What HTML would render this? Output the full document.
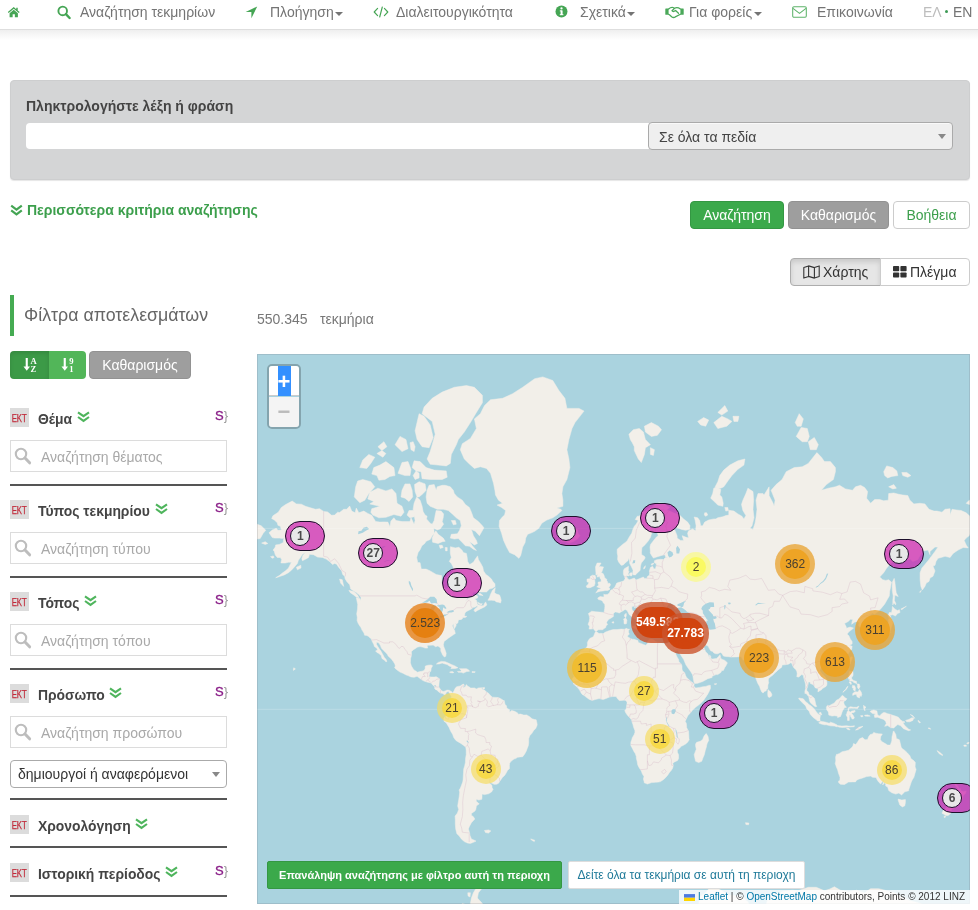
<!DOCTYPE html>
<html lang="el">
<head>
<meta charset="utf-8">
<title>Αναζήτηση τεκμηρίων</title>
<style>
*{box-sizing:border-box}
html,body{margin:0;padding:0;background:#fff}
body{width:978px;height:910px;overflow:hidden;position:relative;font-family:"Liberation Sans",Arial,sans-serif;font-size:14px;line-height:20px;color:#333}
.a{position:absolute;white-space:nowrap}
svg{display:block}
/* nav */
#nav{left:0;top:0;width:978px;height:30px;background:#fff;border-bottom:1px solid #dedede}
#navsh{left:0;top:30px;width:978px;height:10px;background:linear-gradient(#efefef,#fff)}
.nt{top:2px;color:#747474;font-size:14px;line-height:20px}
.caret{width:0;height:0;border-left:4px solid transparent;border-right:4px solid transparent;border-top:4px solid #747474;top:12px}
.g{fill:#45a554}
/* search panel */
#panel{left:10px;top:80px;width:960px;height:100px;background:#d4d5d6;border:1px solid #cdcecf;border-radius:4px;box-shadow:0 1px 1px rgba(0,0,0,.1)}
#plabel{left:26px;top:96px;font-weight:bold;color:#444}
#pinput{left:26px;top:123px;width:624px;height:26px;background:#fff;border-radius:4px 0 0 4px}
#psel{left:648px;top:122px;width:305px;height:28px;background:#efefef;border:1px solid #aaa;border-radius:4px;box-shadow:0 1px 0 rgba(255,255,255,.6) inset}
#pseltxt{left:659px;top:127px;color:#444}
.tri{width:0;height:0;border-left:4px solid transparent;border-right:4px solid transparent;border-top:5px solid #888}
#more{left:27px;top:200px;font-weight:bold;color:#3c9f4c}
.btn{top:201px;height:28px;border-radius:4px;text-align:center;line-height:26px;font-size:14px;border:1px solid transparent}
/* filters */
#fbar{left:10px;top:295px;width:4px;height:41px;background:#45ab52}
#ftitle{left:24px;top:302px;font-size:17.8px;line-height:26px;color:#666}
.fh{left:38px;font-weight:bold;color:#444;font-size:13.9px;margin-top:.7px}
.ekt{left:10px;width:19px;height:19px;background:#dcdcdc;color:#c02a3a;font-size:10.5px;line-height:20px;text-align:center;overflow:hidden}
.ekt span{display:inline-block;transform:scaleX(.74);transform-origin:50% 50%;margin-left:-4px;margin-right:-4px;-webkit-text-stroke:.25px #c02a3a}
.fin{left:10px;width:217px;height:32px;border:1px solid #dcdcdc;background:#fff}
.fph{left:41px;color:#a9a9a9}
.fdiv{left:10px;width:217px;height:2px;background:#555}
.sv{left:215px;font-size:13px;color:#8a1f88;line-height:14px;-webkit-text-stroke:.35px #8a1f88}
.sv i{font-style:normal;color:#999;-webkit-text-stroke:0 transparent}
/* map */
#map{left:257px;top:354px;width:713px;height:550px;overflow:hidden;background:#aad3df}
.mc{position:absolute;border-radius:20px;text-align:center;font-size:12px;line-height:30px;color:#4a4030}
.mc b{display:block;position:absolute;left:5px;top:5px;right:5px;bottom:5px;border-radius:15px;font-weight:normal}
.mc.s{line-height:20px}
.pill{position:absolute;width:40px;height:30px;border-radius:15px;border:1.5px solid #1d0f2b;background:rgba(204,28,172,.7)}
.pill b{position:absolute;left:4px;top:3.5px;width:20px;height:20px;border-radius:10px;border:1.5px solid #1d0f2b;background:#e8e8e8;color:#4a4a4a;font-size:12px;line-height:18px;text-align:center;font-weight:bold}
</style>
</head>
<body>
<div id="wrap" style="position:absolute;left:0;top:0;width:978px;height:910px;will-change:transform;transform:translateZ(0)">
<!-- NAV -->
<div id="nav" class="a"></div><div id="navsh" class="a"></div>
<svg class="a" style="left:7px;top:6.3px" width="13.5" height="12" viewBox="0 0 14 13"><path class="g" d="M7 1.2 L0.6 6.6 L1.5 7.6 L7 3 L12.5 7.6 L13.4 6.6 L11.3 4.8 V1.8 H9.7 V3.5 Z"/><path class="g" d="M7 4.1 L2.5 7.9 V12.2 H5.8 V9 H8.2 V12.2 H11.5 V7.9 Z"/></svg>
<svg class="a" style="left:57px;top:5px" width="14" height="15" viewBox="0 0 14 15"><circle cx="5.7" cy="5.9" r="4.3" fill="none" stroke="#45a554" stroke-width="1.9"/><path d="M8.9 9.2 L12.6 13" stroke="#45a554" stroke-width="2.4" stroke-linecap="round"/></svg>
<div class="a nt" style="left:80px">Αναζήτηση τεκμηρίων</div>
<svg class="a" style="left:244.5px;top:5.5px" width="13" height="13" viewBox="0 0 12 12"><path class="g" d="M11.3 0.5 L0.6 5.5 H5.9 V11.2 Z"/></svg>
<div class="a nt" style="left:270px">Πλοήγηση</div><div class="a caret" style="left:335px"></div>
<svg class="a" style="left:373px;top:6px" width="16" height="12" viewBox="0 0 16 12"><path d="M4.6 2.4 L1.2 6 L4.6 9.6 M11.4 2.4 L14.8 6 L11.4 9.6 M9.3 1 L6.7 11" fill="none" stroke="#45a554" stroke-width="1.15" stroke-linecap="round" stroke-linejoin="round"/></svg>
<div class="a nt" style="left:396px">Διαλειτουργικότητα</div>
<svg class="a" style="left:555px;top:5px" width="13" height="13" viewBox="0 0 13 13"><circle cx="6.5" cy="6.5" r="6" class="g"/><rect x="5.6" y="5.4" width="2" height="4.6" fill="#fff"/><rect x="4.8" y="5.4" width="2" height="1" fill="#fff"/><rect x="4.8" y="9.2" width="3.6" height="1" fill="#fff"/><circle cx="6.5" cy="3.4" r="1.15" fill="#fff"/></svg>
<div class="a nt" style="left:580px">Σχετικά</div><div class="a caret" style="left:627px"></div>
<svg class="a" style="left:664.5px;top:6px" width="19" height="13" viewBox="0 0 19 13"><rect x="0.3" y="2.4" width="3.3" height="6.4" rx=".5" fill="#4aa859"/><rect x="15.4" y="2.4" width="3.3" height="6.4" rx=".5" fill="#4aa859"/><path d="M3.6 3 Q6 .9 8 1.5 L9.6 2.3 Q12.2 .7 15.4 3 M3.6 8.2 Q5 9 6.6 10.7 Q8.6 12.2 10.3 10.9 L15.4 8.2 M9.6 2.3 L7 4.7 Q7.9 6.1 9.4 5.1 L10.6 4.5 L13.5 7.3" fill="none" stroke="#4aa859" stroke-width="1.25" stroke-linejoin="round" stroke-linecap="round"/></svg>
<div class="a nt" style="left:689px">Για φορείς</div><div class="a caret" style="left:754px"></div>
<svg class="a" style="left:792px;top:6px" width="15" height="12" viewBox="0 0 15 12"><rect x="0.7" y="0.7" width="13.6" height="10.6" rx="1.2" fill="none" stroke="#5db36a" stroke-width="1.05"/><path d="M1 2.4 L7.5 7.3 L14 2.4" fill="none" stroke="#5db36a" stroke-width="1.05"/></svg>
<div class="a nt" style="left:817px">Επικοινωνία</div>
<div class="a nt" style="left:923px;color:#bdbdbd">ΕΛ</div>
<div class="a" style="left:944.5px;top:10px;width:3.4px;height:3.4px;border-radius:2px;background:#3d9a55"></div>
<div class="a nt" style="left:953px">EN</div>

<!-- SEARCH PANEL -->
<div id="panel" class="a"></div>
<div id="plabel" class="a">Πληκτρολογήστε λέξη ή φράση</div>
<div id="pinput" class="a"></div>
<div id="psel" class="a"></div>
<div id="pseltxt" class="a">Σε όλα τα πεδία</div>
<div class="a tri" style="left:938px;top:134px"></div>
<svg class="a" style="left:10px;top:204px" width="13" height="13" viewBox="0 0 13 13"><path d="M1.2 1.6 L6.5 5.6 L11.8 1.6 M1.2 6.4 L6.5 10.4 L11.8 6.4" fill="none" stroke="#45a554" stroke-width="2.2" stroke-linejoin="miter"/></svg>
<div id="more" class="a">Περισσότερα κριτήρια αναζήτησης</div>
<div class="a btn" style="left:690px;width:94px;background:#3ba94b;border-color:#349743;color:#fff">Αναζήτηση</div>
<div class="a btn" style="left:788px;width:101px;background:#9e9e9e;border-color:#929292;color:#fff">Καθαρισμός</div>
<div class="a btn" style="left:893px;width:77px;background:#fff;border-color:#ccc;color:#3c9f4c">Βοήθεια</div>

<!-- VIEW TOGGLE -->
<div class="a" style="left:790px;top:258px;width:91px;height:28px;background:#e6e6e6;border:1px solid #adadad;border-radius:4px 0 0 4px;box-shadow:inset 0 3px 5px rgba(0,0,0,.125)"></div>
<div class="a" style="left:880px;top:258px;width:90px;height:28px;background:#fff;border:1px solid #ccc;border-radius:0 4px 4px 0"></div>
<svg class="a" style="left:803px;top:265px" width="17" height="14" viewBox="0 0 17 14"><path d="M0.8 2.6 L5.6 0.9 L11.4 2.6 L16.2 0.9 V11.4 L11.4 13.1 L5.6 11.4 L0.8 13.1 Z M5.6 0.9 V11.4 M11.4 2.6 V13.1" fill="none" stroke="#333" stroke-width="1.1" stroke-linejoin="round"/></svg>
<div class="a" style="left:823px;top:262px;color:#333">Χάρτης</div>
<svg class="a" style="left:893px;top:266px" width="14" height="12" viewBox="0 0 14 12"><rect x="0" y="0" width="6.2" height="5.2" rx="0.8" fill="#333"/><rect x="7.4" y="0" width="6.2" height="5.2" rx="0.8" fill="#333"/><rect x="0" y="6.4" width="6.2" height="5.2" rx="0.8" fill="#333"/><rect x="7.4" y="6.4" width="6.2" height="5.2" rx="0.8" fill="#333"/></svg>
<div class="a" style="left:910px;top:262px;color:#333">Πλέγμα</div>

<!-- FILTERS HEADER -->
<div id="fbar" class="a"></div>
<div id="ftitle" class="a">Φίλτρα αποτελεσμάτων</div>
<div class="a" style="left:10px;top:351px;width:39px;height:28px;background:#3c9a47;border-radius:4px 0 0 4px;box-shadow:inset 0 2px 4px rgba(0,0,0,.12)"></div>
<div class="a" style="left:49px;top:351px;width:37px;height:28px;background:#52b659;border-radius:0 4px 4px 0"></div>
<svg class="a" style="left:22.5px;top:357px" width="17" height="16" viewBox="0 0 17 16"><rect x="2.7" y="1" width="2.1" height="9.5" fill="#fff"/><path d="M0.5 9.6 H7 L3.75 13.8 Z" fill="#fff"/><text x="7.6" y="6.9" font-size="8.6" font-weight="bold" fill="#fff" font-family="Liberation Serif,serif">A</text><text x="7.6" y="14.6" font-size="8.6" font-weight="bold" fill="#fff" font-family="Liberation Serif,serif">Z</text></svg>
<svg class="a" style="left:60.5px;top:357px" width="17" height="16" viewBox="0 0 17 16"><rect x="2.7" y="1" width="2.1" height="9.5" fill="#fff"/><path d="M0.5 9.6 H7 L3.75 13.8 Z" fill="#fff"/><text x="8.2" y="6.9" font-size="8.6" font-weight="bold" fill="#fff" font-family="Liberation Serif,serif">9</text><text x="8.2" y="14.6" font-size="8.6" font-weight="bold" fill="#fff" font-family="Liberation Serif,serif">1</text></svg>
<div class="a" style="left:89px;top:351px;width:102px;height:28px;background:#9e9e9e;border:1px solid #929292;border-radius:4px;color:#fff;text-align:center;line-height:26px">Καθαρισμός</div>

<div class="a" style="left:257px;top:309px;color:#777">550.345</div>
<div class="a" style="left:320px;top:309px;color:#777">τεκμήρια</div>

<!-- FACETS -->
<div class="a ekt" style="top:408px"><span>EKT</span></div><div class="a fh" style="top:408px">Θέμα</div><svg class="a" style="left:77px;top:410.5px" width="13" height="12" viewBox="0 0 13 12"><path d="M1 1.3 L6.5 5.2 L12 1.3 M1 6 L6.5 9.9 L12 6" fill="none" stroke="#4fb55d" stroke-width="2.1" /></svg><div class="a sv" style="top:409px">S<i>}</i></div>
<div class="a fin" style="top:440px"></div><svg class="a" style="left:14px;top:446.5px" width="18" height="18" viewBox="0 0 18 18"><circle cx="7" cy="7" r="5.2" fill="none" stroke="#bdbdbd" stroke-width="2.1"/><path d="M11 11 L15.6 15.8" stroke="#bdbdbd" stroke-width="3" stroke-linecap="round"/></svg><div class="a fph" style="top:446.7px">Αναζήτηση θέματος</div>
<div class="a fdiv" style="top:484px"></div>
<div class="a ekt" style="top:500px"><span>EKT</span></div><div class="a fh" style="top:500px">Τύπος τεκμηρίου</div><svg class="a" style="left:155px;top:502.5px" width="13" height="12" viewBox="0 0 13 12"><path d="M1 1.3 L6.5 5.2 L12 1.3 M1 6 L6.5 9.9 L12 6" fill="none" stroke="#4fb55d" stroke-width="2.1" /></svg><div class="a sv" style="top:501px">S<i>}</i></div>
<div class="a fin" style="top:532px"></div><svg class="a" style="left:14px;top:538.5px" width="18" height="18" viewBox="0 0 18 18"><circle cx="7" cy="7" r="5.2" fill="none" stroke="#bdbdbd" stroke-width="2.1"/><path d="M11 11 L15.6 15.8" stroke="#bdbdbd" stroke-width="3" stroke-linecap="round"/></svg><div class="a fph" style="top:538.7px">Αναζήτηση τύπου</div>
<div class="a fdiv" style="top:576px"></div>
<div class="a ekt" style="top:592px"><span>EKT</span></div><div class="a fh" style="top:592px">Τόπος</div><svg class="a" style="left:84px;top:594.5px" width="13" height="12" viewBox="0 0 13 12"><path d="M1 1.3 L6.5 5.2 L12 1.3 M1 6 L6.5 9.9 L12 6" fill="none" stroke="#4fb55d" stroke-width="2.1" /></svg><div class="a sv" style="top:593px">S<i>}</i></div>
<div class="a fin" style="top:624px"></div><svg class="a" style="left:14px;top:630.5px" width="18" height="18" viewBox="0 0 18 18"><circle cx="7" cy="7" r="5.2" fill="none" stroke="#bdbdbd" stroke-width="2.1"/><path d="M11 11 L15.6 15.8" stroke="#bdbdbd" stroke-width="3" stroke-linecap="round"/></svg><div class="a fph" style="top:630.7px">Αναζήτηση τόπου</div>
<div class="a fdiv" style="top:668px"></div>
<div class="a ekt" style="top:684px"><span>EKT</span></div><div class="a fh" style="top:684px">Πρόσωπο</div><svg class="a" style="left:109px;top:686.5px" width="13" height="12" viewBox="0 0 13 12"><path d="M1 1.3 L6.5 5.2 L12 1.3 M1 6 L6.5 9.9 L12 6" fill="none" stroke="#4fb55d" stroke-width="2.1" /></svg><div class="a sv" style="top:685px">S<i>}</i></div>
<div class="a fin" style="top:716px"></div><svg class="a" style="left:14px;top:722.5px" width="18" height="18" viewBox="0 0 18 18"><circle cx="7" cy="7" r="5.2" fill="none" stroke="#bdbdbd" stroke-width="2.1"/><path d="M11 11 L15.6 15.8" stroke="#bdbdbd" stroke-width="3" stroke-linecap="round"/></svg><div class="a fph" style="top:722.7px">Αναζήτηση προσώπου</div>
<div class="a" style="left:10px;top:760px;width:217px;height:28px;border:1px solid #aaa;border-radius:4px;background:#fff"></div>
<div class="a" style="left:18px;top:764px;color:#333">δημιουργοί ή αναφερόμενοι</div>
<div class="a tri" style="left:212px;top:772px"></div>
<div class="a fdiv" style="top:798px"></div>
<div class="a ekt" style="top:815px"><span>EKT</span></div><div class="a fh" style="top:815px">Χρονολόγηση</div><svg class="a" style="left:135px;top:817.5px" width="13" height="12" viewBox="0 0 13 12"><path d="M1 1.3 L6.5 5.2 L12 1.3 M1 6 L6.5 9.9 L12 6" fill="none" stroke="#4fb55d" stroke-width="2.1" /></svg>
<div class="a fdiv" style="top:846px"></div>
<div class="a ekt" style="top:863px"><span>EKT</span></div><div class="a fh" style="top:863px">Ιστορική περίοδος</div><svg class="a" style="left:165px;top:865.5px" width="13" height="12" viewBox="0 0 13 12"><path d="M1 1.3 L6.5 5.2 L12 1.3 M1 6 L6.5 9.9 L12 6" fill="none" stroke="#4fb55d" stroke-width="2.1" /></svg><div class="a sv" style="top:864px">S<i>}</i></div>
<div class="a fdiv" style="top:895px"></div>

<!-- MAP -->
<div id="map" class="a">
<svg class="a" style="left:0;top:0" width="713" height="550" viewBox="0 0 713 550"><path d="M220.4,239.1L223.4,239.5L226.1,241.6L222.4,241ZM179.4,310.1L181.2,308.4L184.4,307.4L188.2,307.7L191.3,309.1L194.3,310.4L197.9,311.9L200.9,313.8L198.3,314.4L193.9,314.6L194.9,312.9L192.3,312.1L190.2,310.6L187.2,309.7L185.2,309.1L182.2,309.9ZM227.5,476.5L231.5,475.9L233.9,476.9L231.5,479.1L228.5,478.5ZM261.9,204.3L257.6,200.7L252.6,198.6L249.6,193.1L246.6,186.4L244.6,179.3L242.1,172.3L242.5,166.5L245.6,162.7L247.6,161.1L248.6,156.5L244.6,153.5L240.1,151.1L245.6,149.3L241.5,146.2L238.5,141L237.9,136.3L236.5,129.2L233.5,119.3L229.5,114.4L223.4,112.8L217.4,114.4L211.8,109.4L207.3,105L203.3,95.7L205.3,89.7L213.4,84.5L219.4,74.5L217.4,64.9L223.4,59.7L227.5,51.6L233.5,45.8L245.6,44.3L255.6,39.7L265.7,33.3L277.7,24.7L285.8,22.9L295.8,26.5L301.9,36.5L307.9,44.3L309.9,54.4L322,54.4L327,57.1L318,68.6L315,74.5L311.9,85.6L309.9,95.7L311.9,105L312.9,113.6L310.9,121.6L309.9,125.5L305.9,132.8L304.9,139.6L305.9,146.2L305.9,152.3L299.9,154.1L303.9,155.3L304.9,156.5L299.9,161.1L295.8,163.8L289.8,166L284.8,169.2L281.8,174.3L277.7,177.3L274.5,178.8L270.7,180.3L268.7,184.1L268.1,188.6L265.7,193.1L264.7,197.4L263.7,201.5ZM82.6,225.1L85.3,225.7L86.7,232.4L83.6,229.1ZM200.5,317.4L203.3,317.4L204.3,316.4L202.5,314.7L205.3,314.7L209.4,314.7L211.4,315.7L212.6,317.2L209.6,317.6L206.3,319.1L204.3,318.3L201.3,318.3ZM300.9,179.3L304.9,174.6L306.9,179.3L308.9,178.8L309.3,176.3L312.9,175.9L317,174.3L320.4,175.4L321,179.3L323,181.7L320.4,185L317,187.3L312.5,189.1L308.9,187.7L304.5,187.3L305.9,185L304.9,182.6L301.9,182.2L304.9,181.2L305.3,179.3ZM192.7,317.9L195.3,317.5L196.9,318.5L195.3,318.9L192.9,318.5ZM39.4,213.2L43.8,211.3L44,214L40.4,215.8ZM201.3,265.8L205.3,264.5L204.3,265.3ZM12,178.8L15.3,175.9L19.3,174.3L20.9,176.3L24.5,175.9L23.3,172.3L20.9,171.3L20.3,168.7L17.3,166L14.7,164.6L15.9,161.8L21.3,158.2L24.3,153.5L28.7,150.5L35.2,147.1L39.4,149.9L44.4,150.2L48.5,152.3L52.5,153.5L58.5,155.3L62.5,154.7L66.6,157.4L70.6,157.9L74.6,161.3L77.6,161.1L80.6,158.2L82.6,158.5L86.7,155.3L89.7,155.3L92.7,152L94.7,157.1L98.1,158.8L99.3,154.1L101.8,158.8L106.8,157.1L110.8,159.4L114.8,161.3L118.6,167.5L122.9,168.1L126.9,167.9L130.9,168.1L132.9,172.8L133.9,167.1L136.9,163.8L139,166.5L145,167.6L149,167.6L153,167.6L154,163.8L157.1,170.2L158.1,166.5L157.1,161.1L156.1,155.3L157.1,149.3L159.7,142.9L163.1,146.2L165.1,152.3L166.1,157.6L168.1,161.1L170.1,162.2L169.5,164.9L173.2,169.2L175.2,170.2L177.2,166.5L178.2,161.1L179.2,156.5L184.2,157.1L186.6,159.9L186.2,163.8L185.2,167.6L186.6,170.2L183.2,174.9L180.2,175.9L176.8,174.3L177.2,179.3L175.2,181.7L173.2,185.4L169.1,187.3L167.7,189.5L164.9,191.8L163.1,195.7L161.1,198.6L159.7,203.5L160.7,208.4L163.1,208.7L164.3,215.1L169.1,215.1L173.2,216.9L179.2,220.5L184.6,221.6L184.8,225.7L184.6,229.1L187.2,232.4L188.2,234.7L190.2,235L191.7,232.4L191.9,229.1L190.9,225.7L189.8,223.3L193.7,220.5L196.1,216.9L196.3,213.2L194.3,209.4L192.3,207.5L194.3,203.5L193.3,199.4L193.3,193.9L193.5,192.7L198.3,193.9L201.9,193.3L205.3,196.5L206.3,198.6L209.4,199.4L210.2,203.5L210.6,207.5L212.6,210.6L216.4,208.3L218.4,205.1L220.6,201.9L221.4,205.5L223.8,209.4L225.8,213.2L226.5,216.9L228.9,220.5L231.5,222.3L234.5,225.1L235.5,227.1L237.9,229.8L238.1,232.4L235.9,234.1L232.5,235L229.5,237.9L225.4,238L221.4,237.9L216.6,238.2L214.4,241L212.4,241.9L210,244.7L208.4,247.1L210.4,245.3L212.4,243.5L215.4,241.9L219.4,241.2L220.8,242.2L220.4,244.1L217.4,245L219.4,246.2L219.8,247.9L220.4,250.3L221.8,250.9L224.4,251.7L226.5,251.7L227.5,249.4L228.7,247.9L229.9,250.9L227.5,252.9L223.4,254.9L220.4,256.5L218.2,257.9L217,256.5L217.8,254.9L220.4,252.9L220.4,251.4L218.4,252.9L217.4,253.2L215.4,253.4L215.4,254.3L213,255.7L211.4,256.5L209,257.7L207.9,259.3L207.7,260.7L207.3,261.2L208.2,262.3L209.4,262.1L209.4,262.9L207.9,263.4L206.5,263.4L205.3,263.9L205.3,264.7L201.5,265.8L201.3,266.3L200.9,268.7L199.5,270.1L198.3,268.7L199.1,270.5L199.1,271.8L197.9,273.8L197.3,274.8L196.7,272.6L196.5,269.5L195.3,271.8L196.7,275.1L197.5,276.1L198.3,279.5L196.3,280.8L193.5,282.7L191.3,284.2L189.2,285.9L187.2,287.3L186.4,290.4L186.6,292.2L188,295.7L189.2,299.3L188.8,302.2L187.4,303L185.6,300.9L184.8,299.1L183.8,297.1L183.8,294.5L182.2,292.7L180.8,292L178.6,292.7L176.2,291.1L173.2,291.3L171.1,291.3L170.1,291.8L170.7,294.1L168.1,294.1L166.1,293.2L163.1,292.6L160.1,293.2L159.1,294.1L156.1,295.9L154.4,297.7L154.6,301.1L153.6,304.4L153.4,308.8L154.4,312.1L156.1,314.7L156.9,315.9L159.1,317.2L160.3,318.2L163.1,317.6L165.1,317.2L167.1,316.6L168.1,314.7L168.3,312.1L171.1,311.2L174.2,311L175.6,311.7L174.2,314.2L173.8,317.4L172.8,317.4L172.5,319.5L171.9,322.7L174.2,323L177.2,323.1L179.2,322.7L182.6,324.8L182.2,327.9L182,330L181.8,333L183.2,335.1L184.8,336.7L186.2,337.5L188.2,336.9L190,336.1L192.3,336.3L194.5,337.7L194.9,339.4L193.5,340.8L192.5,339.2L191.3,337.3L189.2,338.5L188.6,340.4L187.2,340.8L185.8,339.4L183.4,339L181.8,338.1L179.8,335.9L179,335.9L177.6,334.5L177.8,333L175.8,331L174.2,329.1L172.1,328.5L169.5,327.9L167.1,327.1L164.7,325.8L162.1,323.7L160.1,322.3L157.1,323.3L154,322.9L151,321.6L149.2,321L146,319.3L143,318.1L140.4,316.2L138,314.2L137.6,313.4L138.4,312.1L137.8,309.9L136.1,307.3L133.9,304.4L131.3,302.2L130.1,300L127.9,297.7L126.9,296.8L124.5,294.3L123.3,291.3L121.9,289L119.5,288L119.5,290.4L121.9,294.3L123.9,297.1L125.9,300.7L127.5,303.8L128.9,305.1L129.9,307.3L129.1,308L127.9,306.6L124.9,304.4L124.3,301.6L121.9,299.5L119.9,298.4L118.6,296.9L120.5,296.1L119.9,294.3L117.4,292.5L116.8,290.4L115.4,287.8L114.6,286.1L114.2,284.7L112,283L111.8,282.5L109.8,281.5L107.6,281.2L107,279.1L105,276.1L103.8,273.3L102.8,272L101.1,269.2L100.1,266.6L100.3,263.4L99.7,259.9L100.5,255.1L100.7,250.3L99.3,243.8L102.8,244.4L103.8,246.5L104,243.5L102.8,241.9L102.4,241L99.7,238.8L96.7,236.9L93.7,235L92.7,230.8L89.7,227.4L88.1,224.7L87.7,222.3L85.7,220.5L84.7,216.9L81.6,213.2L79.6,210.2L77.6,209.4L75.6,210.6L72.6,207.5L69.2,205.1L65.5,203.5L60.5,203.1L56.5,200.7L52.5,200.3L51.5,203.5L49.5,204.7L45.4,206.7L44.8,204.7L45.8,201.5L48.5,198.6L45.4,200.3L43.4,203.5L41.4,206.3L40.4,209.4L37.4,212.9L34.4,216.2L31.4,218.7L27.3,220.9L23.3,222.3L21.3,223L18.7,223.7L22.3,221.6L25.3,219.1L28.3,216.9L31.4,214.3L33.4,210.2L34.4,208.3L31.4,208.3L28.3,209L24.7,209L23.9,208.9L24.7,205.5L23.3,203.5L20.3,203.5L18.3,201.1L17.3,197.4L16.1,196.1L18.3,193.1L18.7,190.9L22.3,190.4L26.3,188.6L26.7,184.1L25.3,184.5L22.3,184.1L17.5,184.1L15.3,183.6ZM230.9,246.2L232.5,243.5L233.5,240.4L235.5,236.3L238.3,233.7L237.9,236.3L237.5,238.8L239.5,240.1L242.5,241L243.5,243.5L244.2,246.5L243.5,249L241.5,248.2L239.5,247.9L237.5,246.5L234.5,246.2ZM13.5,202.7L16.3,201.9L17.1,203.5L15.3,204.3ZM220.6,248.2L223.4,249.7L225.4,249.7L224.4,250.9L221.8,250ZM215,317.6L218.2,317.7L217.8,318.5L215,318.5ZM194.5,337.7L195.7,339.2L197.3,336.3L198.3,334.1L199.7,332.8L200.9,332.4L203.3,332L205.3,330.6L206.7,330.1L207.3,331.4L205.9,333L206.1,333.7L208.4,332.4L209.4,330.6L210.4,332L212.8,333.2L213.4,334.1L217.4,333.9L219.4,334.9L221.4,333.9L225.4,333.7L224.4,334.7L227.5,336.1L229.5,338.1L231.5,339.2L233.5,341.6L235.5,343.2L239.1,343.4L241.5,343.6L244.6,345.2L246.6,346.6L247.2,346.4L248,350.3L249.6,351.9L249.6,353.3L250.6,354.7L252.6,355.7L252.6,358.2L254.6,356.5L257.6,357.3L260.6,358.9L261,360.3L263.7,360.1L266.7,361.1L269.7,360.9L272.7,362.7L275.1,364.8L277.7,365.6L279.2,365.8L279.8,368.4L280.2,370.4L280,371.6L278.7,374.5L276.7,376.5L275.7,378L274.7,379.6L272.7,381.7L271.7,384.8L271.7,389L271.3,391.7L270.3,394.2L269.3,397L267.7,400L265.7,402.7L263.3,402.9L260.6,403.3L258.6,404.6L257,405L254,407.3L252.6,409.3L252.4,411.7L252.4,414.7L250.6,416.3L249,419.3L247.6,421.4L245.4,423.5L242.7,427.4L241.5,429.3L239.5,430.3L237.1,430.3L234.5,429.1L232.7,428.1L232.5,429.1L234.9,431.3L235.1,433.8L236.1,435.3L234.5,438L231.5,439.8L227.5,440.6L225,440.1L225,443.2L224.8,445.3L221.8,446.1L219.4,445.3L219.2,447.2L221.4,449.1L222.2,449.9L220.4,451L219.4,452.1L218.8,455.5L218,456.9L214.4,459.5L214.4,461.2L216.4,462.7L217.8,465L214.4,468.7L212.4,472.4L211.4,474.9L212.6,479.1L213,481.5L214.4,484.9L219,487.1L216.4,488.3L213.4,489.4L210.4,489L207.3,487.6L204.3,484.9L202.3,482.1L199.9,479.8L198.7,474.9L198.3,470.2L198.3,465.6L198.1,462.1L200.3,459.2L201.7,455.5L200.7,452.1L201.3,448L201.7,445.9L202.3,441.9L202.7,438L202.1,436L203.3,434.3L204.3,431.8L205.7,428.1L206.1,425.7L206.3,422.1L206.5,418.6L206.7,415.1L207.7,411.7L208.4,408.4L208.6,404.2L209.2,400.7L209.2,396.8L208.8,393.2L206.7,391.5L203.9,389.4L201.3,387.9L198.9,386.4L196.7,383.5L195.7,380.6L195.1,379.6L193.9,377.6L192.9,375.5L192.1,373.5L190.2,370.4L189.2,368.8L187.2,367.4L186.6,364.8L188.2,362.3L189.2,361.7L189.4,360.3L187.4,359.7L187.6,357.3L189,355.3L189.2,353.7L191.3,352.9L191.7,351.7L192.9,350.1L194.3,348.7L195.3,347.4L194.3,344.2L194.5,342.2L193.5,340.8ZM4.6,189.1L8.2,187.7L10.8,189.5L8.2,190.4ZM225.8,333.7L227.5,333.4L227.5,334.9L225.8,334.9ZM91.9,236.3L96.7,237.6L98.3,238.8L100.9,241.3L102,243.8L99.3,243.1L96.7,241L93.1,238.5ZM153,88.7L156.1,87.7L158.1,92.7L157.1,97.6L154,95.7ZM158.1,76.8L162.1,59.7L167.1,62.3L173.2,71L176.2,83.5L172.1,93.7L165.1,92.7L160.1,85.6ZM219.4,196.5L216.4,195.2L212.4,192.2L208.4,191.8L205.3,188.6L201.3,184.5L197.3,185L193.3,184.1L194.3,180.3L200.3,179.8L202.3,176.8L204.3,171.8L203.3,166.5L199.3,163.8L195.3,159.9L191.3,156.5L186.2,155.3L180.2,155.3L176.2,153.5L173.2,152.3L170.1,149.3L169.1,142.9L170.1,136.3L172.1,131.3L177.2,130.6L179.2,136.3L180.2,132.8L185.2,131.3L188.2,131.3L193.3,132.8L196.3,136.3L197.3,139.6L200.3,142.9L205.3,146.2L208.4,150.5L212.4,153.5L214.4,158.2L216.4,163.8L221.4,167.6L225.4,171.8L226.9,173.8L224.4,178.3L222.4,181.7L218.4,177.3L214.4,175.4L216.4,181.7L219.4,186.4L220.4,189.5L217.4,190.9L212.4,187.5L215.4,191.8L218.4,195.2ZM102.8,148.7L97.3,142.9L98.7,132.8L100.7,127L105.8,125.5L113.8,127.7L117.8,132.8L111.8,139.6L107.8,146.2ZM141,119.3L145,108.5L151,107.6L154,115.3L153,121.6L148,121.6ZM120.9,92.7L126.9,87.7L129.9,92.7L124.9,96.6ZM182.2,191.3L185.2,191.3L186.2,193.5L183.2,194.4ZM156.1,121.6L159.1,116.9L162.1,119.3L162.1,123.9L158.1,125.5ZM155.1,113.6L157.1,106.8L163.1,107.6L169.1,113.6L177.2,116.1L189.2,116.9L190.2,123.2L185.2,125.5L173.2,125.5L165.1,124.7L164.1,117.7L159.1,116.9ZM393.4,93.7L397.4,95.7L396.4,101.4L393.4,100.4ZM138,90.7L143,82.4L149,85.6L151,94.7L145,97.6ZM189.2,111.9L193.3,109.4L194.3,100.4L199.3,90.7L201.3,85.6L207.3,78L213.4,68.6L219.4,58.4L225.4,48.7L225.4,41.3L217.4,33.3L209.4,31.6L197.3,33.3L185.2,38.1L175.2,44.3L167.1,53L165.1,59.7L175.2,67.4L178.2,80.2L175.2,90.7L173.2,97.6L170.1,105L173.2,110.2L181.2,111.1ZM440.7,67.4L446.7,63.6L451.7,66.1L448.7,72.2L443.7,71ZM456.8,68.6L464.8,62.3L470.8,64.9L474.9,67.4L469.8,72.2L460.8,74.5ZM460.8,58.4L467.8,51.6L470.8,57.1L464.8,61.1ZM475.9,62.3L481.9,62.3L480.9,67.4L476.9,67.4ZM150,161.1L152,156.5L156.1,156.5L158.1,159.4L157.1,162.7L153,163.8ZM447.7,158.8L449.7,158.8L450.7,161.1L448.7,162.2L447.3,161.1ZM626.7,117.7L629.7,111.9L635.8,113.6L639.8,116.9L640.8,121.6L634.8,122.4L630.7,123.9L627.7,121.6ZM631.7,132.8L636.8,130.6L639.4,134.2L635.8,134.9ZM119.9,99.5L124.9,96.6L128.9,99.5L125.9,103.2ZM188.2,193.5L190.2,193.5L190.2,196.9L188.6,196.9ZM114.8,120.1L116.8,113.6L122.9,111.1L128.9,107.6L136.9,113.6L138,121.6L132.9,122.4L127.9,125.5L121.9,126.2L119.9,121.6ZM644.8,118.5L649.8,118.5L653.9,121.6L650.8,123.2L645.8,121.6ZM387.4,72.2L394.4,68.6L401.4,72.2L404.5,75.7L400.4,81.3L394.4,82.4L388.4,78ZM457.8,133.5L460.8,127.7L462.8,121.6L466.8,116.1L472.8,111.1L480.9,106.8L487.9,105L486.9,111.1L480.9,115.3L474.9,121.6L470.8,127L466.8,132.8L463.8,134.2ZM465.8,152.3L460.8,151.1L457.8,148L453.7,144.2L455.7,139.6L456.8,134.2L460.8,133.5L463.8,135.6L462.8,141L464.8,142.9L466.2,149.3ZM194.3,166.5L198.3,166.5L199.3,170.2L196.3,170.8ZM144,142.9L145,136.3L148,129.9L153,129.9L155.1,136.3L155.7,142.9L152,147.4L148,144.2ZM102.8,113.6L105.8,105.9L111.8,100.4L117.8,103.2L113.8,109.4L109.8,114.4ZM158.1,137.6L157.5,130.6L162.1,127.7L168.1,129.9L169.1,136.3L166.1,139.6L162.1,142.9L160.1,142.9ZM175.6,188.2L181.2,189.5L185.2,187.7L188.2,187.3L186.2,184.1L181.2,180.3L178.8,176.8L177.2,179.3L175.2,184.1ZM371.9,80.2L376.3,75.7L382.3,74.5L386.4,78L388.4,85.6L393.4,90.7L388.4,93.7L387.4,100.4L384.3,108.5L381.3,105L377.3,96.6L377.3,92.7L375.3,88.7L373.3,85.6ZM551.3,87.7L557.3,83.5L561.3,90.7L559.3,95.7L553.3,95.7ZM538.2,68.6L542.2,59.7L546.3,64.9L544.2,72.2L540.2,72.2ZM539.2,82.4L544.2,73.4L550.3,74.5L552.3,82.4L550.3,87.7L545.2,87.7ZM467.8,153.5L470.8,153.5L471.4,156.5L468.8,157.1ZM115.8,161.1L121.9,163.8L128.9,163.3L136.9,160.5L144,162.2L147,158.2L145,152.3L140,149.3L139,139.6L134.9,134.9L128.9,136.9L120.9,134.2L112.8,138.3L110.8,144.9L116.8,147.4L112.8,149.9L122.9,152.3L114.8,154.7L113.8,158.2ZM709.2,149.3L712.2,146.2L716.8,147.4L717.2,149.9L712.2,150.5ZM338.7,238.7L341.7,237.7L343.1,237.3L346.1,236.9L348.1,236.5L350.8,236.5L353,235.2L353,234.4L351.6,234.1L352.2,233.1L353.6,230.8L352.8,229.3L350.8,229.5L350.8,228.5L350.1,227.1L349.7,226.8L349.9,225.4L347.7,223.7L347.1,221.6L346.1,219.5L344.1,218.7L344.9,217.7L345.9,214.7L346.5,212.9L343.1,212.5L341.7,213.2L344.1,209L340.1,209L338.5,212.9L338.7,216.2L338.9,218.7L338.9,221.2L340.5,220.2L340.1,223L343.1,222.6L342.9,224L344.1,225.7L344.1,227.8L341.1,228.1L341.1,229.8L341.9,231.1L339.7,232.8L342.1,233.7L344.1,234.4L343.1,235L341.1,235.3L340.1,237.3ZM367.4,261L369.1,259.3L369.4,261.5L368.7,263.7L367.8,262.9ZM397.4,278.8L399.4,279.1L403,279.3L402.4,280.1L399.8,280.2L397.4,279.5ZM415.1,280.1L416.5,279.2L419.7,278.3L418.5,280.1L416.5,281ZM-322,148.7L-317.6,149.3L-313.6,152.3L-311.6,153.5L-314.6,155.9L-311.6,157.1L-307.6,158.8L-301.5,161.1L-297.5,164.9L-293.5,168.1L-291.1,171.8L-291.5,175.4L-295.5,176.3L-299.5,175.4L-303.5,173.8L-307.6,172.8L-308.8,171.3L-306.5,175.4L-303.9,181.7L-303.9,184.1L-300.5,186.4L-297.5,186.4L-298.9,181.7L-295.5,183.1L-292.5,184.1L-293.5,179.3L-292.5,176.8L-288.4,174.9L-285.4,176.8L-285,171.8L-285.8,166.5L-286.8,163L-283.4,163.8L-281.4,166.5L-280.4,171.8L-278.4,171.8L-276.4,168.1L-272.4,166L-267.3,164.9L-265.3,164.9L-263.3,163.8L-258.3,162.7L-255.3,161.6L-252.2,161.1L-252.2,156.2L-247.2,157.1L-243.2,159.9L-239.2,162.2L-237.2,164.9L-235.1,161.6L-238.2,156.5L-239.6,150.5L-238.2,146.2L-235.1,139.6L-233.1,134.2L-228.1,137.6L-227.5,146.2L-228.1,155.3L-227.1,163.8L-229.1,171.8L-231.1,174.3L-228.1,175.4L-226.1,169.2L-225.1,163.8L-224.1,155.3L-225.1,146.2L-223.1,139.6L-218.1,139.6L-217,141L-212,132.8L-212,141.6L-208,149.3L-207,152.3L-206,146.2L-210,136.3L-205,130.6L-198.9,125.5L-194.9,117.7L-186.9,113.6L-178.8,112.8L-172.8,109.4L-164.1,98.6L-159.7,103.2L-156.7,107.6L-150.7,107.6L-145.6,113.6L-145.6,117.7L-147.7,125.5L-154.7,130.6L-159.7,136.3L-152.7,134.2L-145.6,132.8L-141.6,131.3L-135.6,134.9L-128.5,136.3L-125.5,132.8L-120.5,131.3L-116.5,133.5L-113.5,137.6L-114.5,144.2L-110.4,149.3L-106.4,145.5L-101.4,145.5L-97.4,146.8L-92.7,146.2L-92.3,139.6L-87.3,139L-82.3,140.3L-78.3,141L-73.2,141.6L-71.2,146.2L-67.2,149.9L-61.2,149.3L-56.1,149.9L-52.1,155.3L-47.1,157.1L-44.1,157.1L-39,158.2L-36,155.3L-31,154.7L-31,161.1L-29,155.3L-25,155.9L-19.9,156.5L-14.9,158.8L-11.9,161.6L-7.9,164.9L-3.8,167.6L0.2,170.2L4.2,171.8L8.8,176.3L6.2,179.3L3.2,184.5L0.2,185L-3.8,179.3L-9.9,176.8L-11.9,181.7L-14.9,184.1L-16.9,186.4L-14.9,190.9L-12.9,193.9L-17.9,193.5L-23,196.1L-28,199.4L-31,203.5L-36,202.3L-40,203.5L-43.1,204.3L-45.1,207.5L-46.1,211.3L-48.1,212.1L-46.1,216.9L-48.1,222.3L-51.1,224L-52.1,227.4L-54.7,229.1L-56.1,232.4L-58.8,236L-60.2,232.4L-61,225.7L-61,218.7L-59.2,214L-56.1,210.6L-52.1,205.5L-49.1,201.5L-46.1,197.4L-43.1,193.1L-46.1,193.1L-51.1,197.4L-51.1,200.7L-53.1,196.1L-58.1,196.9L-62.2,203.5L-63.2,205.5L-68.2,207.5L-70.6,205.3L-74.2,205.5L-80.3,206.3L-85.9,206.3L-90.3,209.4L-94.4,214L-97.4,218.7L-101.4,223L-98.4,225.7L-95.4,226.4L-92.3,225.7L-89.7,228.1L-90.3,232.4L-91.3,237.3L-91.7,241.9L-94.4,246.5L-96.4,250L-99.4,253.7L-102.4,257.1L-106.4,259.9L-108.6,259L-111,261.2L-112.9,263.4L-113.1,265.3L-115.5,267.4L-117.5,269.2L-115.7,271.3L-113.7,275.1L-113.5,277.6L-114.1,279.6L-116.5,280.6L-119.5,281.5L-119.7,278.8L-119.5,275.6L-119.3,273.8L-121.5,273.1L-122.5,271.3L-121.9,268.7L-123.7,267.4L-126.5,268.2L-129.4,270.2L-128.9,267.4L-128.1,265.5L-130.6,265.3L-133,267.6L-136.6,269.5L-135,272.6L-134.6,274.3L-131,273.1L-127.5,274.1L-129.6,275.8L-132,277.6L-134,280.1L-132.2,281.8L-130.8,284.9L-128.9,287.5L-128.9,289.9L-131.6,291.3L-128.9,292.2L-129.4,295.5L-131.2,296.6L-133.2,300.4L-134,301.1L-135.2,303.8L-136.4,304.4L-138.6,306.6L-139.2,307.1L-142.6,308.4L-144.2,309.3L-145.6,309.5L-148.7,310.6L-151.7,311.7L-152.1,313.6L-153.1,311.2L-154.5,311L-156.7,311L-159.1,312.5L-160.7,314.7L-161.3,316.8L-159.7,319.1L-158.1,321L-156.3,322.5L-154.7,325.2L-154.1,328.9L-154.3,331.2L-155.1,332.4L-158.3,334.3L-159.3,335.5L-161.7,337.1L-163.1,337.9L-162.9,335.5L-163.7,334.3L-165.8,333.9L-167,331.8L-168.2,330.6L-170.8,329.5L-171,328.1L-171.8,327.9L-172.8,328.3L-172.9,330L-173.6,333L-174.4,335.1L-174.2,336.7L-172.8,338.1L-172,340.8L-169.8,341.6L-168.4,342.8L-166.6,344.6L-166,347.2L-165.4,350.3L-164.3,352.5L-165.8,352.7L-167.8,351.3L-169.2,350.1L-170.2,349.3L-171.4,347.2L-172,344.4L-172.4,342.4L-173.4,341.4L-174.4,340L-175.6,339.4L-176.2,339.6L-176.2,337.1L-175.6,335.1L-175.4,332L-175.6,330L-176.4,326.9L-177.4,323.7L-177.6,321.6L-179.2,320.6L-180.4,321.4L-182.2,323.1L-184.3,322.7L-183.9,319.5L-184.3,317.4L-185.5,315.3L-187.1,314L-188.3,312.1L-189.3,309.3L-190.9,308.8L-191.9,309.9L-193.9,310.4L-196.3,310.8L-198.9,311L-199.3,313.2L-201.4,314.7L-203,315.9L-205,317.9L-206.4,319.1L-208.4,321.2L-210.6,322.7L-212.6,324.8L-212.8,326.9L-212.4,328.7L-213.2,331L-213.3,334.5L-215,335.9L-214.6,336.7L-216.6,337.5L-218,339L-219.3,338.1L-220.7,335.1L-221.5,332.5L-223.5,329.1L-224.9,325.2L-225.5,323.7L-226.5,320.6L-227.5,316.4L-227.7,313.2L-227.9,311L-228.1,309.5L-228.9,311.7L-231.1,312.5L-233.1,312.1L-235.1,309.5L-233.1,308.4L-235.1,308.2L-236.2,306.4L-238.2,305.8L-239.2,303.8L-240.2,302.5L-244.2,302.9L-248.6,303.1L-250.2,303.1L-252.2,302.7L-255.3,302.5L-257.7,302L-259.3,299.3L-260.7,298.4L-263.3,299.8L-265.3,299.8L-267.3,298.9L-268.3,297.5L-270.3,296.8L-271.8,294.5L-273,292L-275.4,291.1L-276.4,292L-277.4,293.2L-276.4,295.5L-275.4,297.7L-273.2,300L-272.4,302.2L-271.8,303.3L-271.4,300.9L-270.1,302.7L-270.5,304.4L-268.3,305.1L-264.5,304.4L-262.7,302.7L-261.1,300.7L-260.5,303.3L-259.9,304.9L-256.3,306.4L-253.7,308.8L-255.3,312.1L-256.3,313.4L-257.7,316.4L-259.3,316.6L-260.3,318.5L-263.3,320.6L-265.1,320.6L-268.9,322.3L-268.9,323.5L-273.4,324.8L-275.2,325.8L-278.4,327.5L-283.4,329.3L-286.4,329.5L-287,328.3L-287.6,325.2L-288,322.7L-288.4,320.8L-290.5,317.4L-292.5,314.7L-295.1,311L-296.5,307.7L-297.5,305.3L-299.1,302.9L-300.5,300.7L-302.5,297.7L-303.5,296.4L-303.7,293.2L-304.7,296.6L-304.9,297.1L-306.3,295.9L-307.6,294.3L-308.4,292.1L-309,289L-307.6,289.4L-305.1,289L-304.1,287.3L-303.5,285.4L-302.5,282.7L-301.9,281.3L-301.7,278.8L-301.1,276.1L-302.5,276.1L-304.3,275.6L-306.5,277.3L-308.6,277.3L-311.6,275.6L-312.6,276.8L-314.6,277.1L-317.2,275.8L-319,275.1L-319.2,271.5L-321,271.8L-320,270L-321.4,268.7L-321.2,267.4L-321.2,266.6L-321.6,265.3L-323.6,265L-324.9,265L-326.1,266.1L-325.7,267.4L-327.1,266.9L-327.7,266.1L-328.5,267.4L-327.7,269.5L-326.7,271L-325.7,272.6L-326.3,272.8L-327.7,272.8L-327.3,274.1L-327.5,276.3L-328.9,276.6L-330.3,275.6L-331.1,273.3L-330.3,271.8L-331.7,270.2L-333.3,268.7L-334.9,266.3L-334.7,263.4L-335.7,261.5L-337.5,260.3L-340.9,257.9L-343.4,256.3L-344.8,252.9L-346.6,253.7L-346.4,252L-349.2,252.6L-349.2,255.1L-348.6,256.5L-346.8,257.7L-345.4,260.7L-342.8,262.1L-341.3,262.3L-341.7,263.4L-339.9,264.5L-337.7,265.8L-336.7,267.1L-337.1,267.9L-339.3,266.1L-340.5,267.4L-339.5,270L-340.7,271.5L-342.4,272.7L-342.4,272L-341.7,270L-342.6,267.4L-344.2,265.8L-345.4,265.3L-347.8,263.9L-349.4,262.6L-351.8,260.7L-353.2,257.9L-354.2,256.3L-356,255.4L-357.8,256.8L-359.2,257.4L-361.9,259L-363.9,258.2L-365.9,257.9L-367.5,259.3L-367.7,260.7L-367.5,262.3L-369.5,263.7L-372.3,265.3L-373.9,267.4L-374.5,268.7L-373.5,270.6L-374.9,271.8L-375.3,273.6L-377.8,275.1L-378.4,275.8L-381,275.8L-382.8,275.8L-384.7,277.2L-385.2,277.6L-386.6,276.3L-387.8,274.6L-389.8,275.1L-391.9,275.1L-391.6,272.6L-392.4,270.8L-393,270.5L-391.8,267.4L-391.4,264.2L-391.8,261.8L-392.6,259.6L-390.8,258.2L-389.4,257.2L-385.4,257.8L-381.6,258.1L-377.5,258.4L-376.9,257.9L-376.3,254.6L-376.1,252.3L-376.3,250.3L-378,248.5L-378.4,247.2L-380,246.2L-382.6,245.6L-383.4,244.1L-381,242.5L-378,243L-377.1,243L-377.1,239.9L-376.3,240.7L-373.7,240.4L-371.7,239L-370.7,236.6L-369.1,235.5L-367.5,234.5L-365.9,232.4L-364.5,229.3L-362.9,228.5L-359.8,227.8L-357.6,227.1L-356.6,226.1L-356,224.4L-356.6,222.3L-357.6,220.3L-357.6,216.6L-356.6,214.7L-352.6,212.3L-352.8,216.9L-352,217.7L-353.4,220.5L-354.8,222.3L-354.2,223L-353.6,224.4L-351.8,225.7L-349.6,225.1L-346.8,224L-345.2,226.1L-341.7,224.7L-337.7,223L-336.5,224.4L-334.3,224.4L-333.7,222.6L-331.7,221.2L-331.5,219.8L-331.7,216.9L-330.7,213.6L-328.5,212.3L-327.3,214.7L-325.7,215.1L-324.9,211.7L-324.7,209.8L-326.7,208.7L-326.7,206.7L-324.2,205.7L-320.6,205.3L-317.6,205.5L-315.6,203.5L-313.2,203.7L-315.6,202.7L-316.2,200.7L-319.6,201.5L-323.6,202.7L-327.7,204.1L-329.3,201.7L-330.9,199L-330.7,197.4L-331.1,193.1L-330.5,190.4L-327.7,186.8L-324.7,183.1L-322.8,181.7L-323.6,178.8L-325.5,177.8L-329.3,178.8L-330.7,183.6L-333.1,187.3L-336.3,190.9L-337.9,192.6L-339.1,193.5L-339.5,198.2L-339.3,200.7L-336.7,202.3L-335.9,203.9L-337.5,206.3L-339.7,209L-340.5,212.1L-340.9,216.2L-342.6,218L-345.2,220.2L-345.4,220.9L-347.8,220.9L-348,220.2L-348.4,218.6L-348,216.2L-349.8,212.5L-351.4,209.4L-351.6,207.1L-352.4,203.9L-353.2,206.7L-354.8,207.9L-357.8,211L-359.8,211.3L-362.5,207.9L-363.5,205.5L-363.3,201.9L-363.9,199L-363.9,195.2L-361.5,193.1L-358.4,190.4L-354.8,187.7L-353.8,186.4L-351.4,182.2L-349.4,179.3L-348.4,175.9L-346.8,172.3L-345,170.2L-342.8,166.5L-345.8,165.5L-343.8,162.2L-341.7,162.2L-338.7,158.2L-335.7,157.1L-332.7,154.7L-329.7,153.5L-326.3,151.1ZM402,148.7L406.5,149.3L410.5,152.3L412.5,153.5L409.5,155.9L412.5,157.1L416.5,158.8L422.6,161.1L426.6,164.9L430.6,168.1L433,171.8L432.6,175.4L428.6,176.3L424.6,175.4L420.5,173.8L416.5,172.8L415.3,171.3L417.5,175.4L420.1,181.7L420.1,184.1L423.6,186.4L426.6,186.4L425.2,181.7L428.6,183.1L431.6,184.1L430.6,179.3L431.6,176.8L435.6,174.9L438.6,176.8L439.1,171.8L438.2,166.5L437.2,163L440.7,163.8L442.7,166.5L443.7,171.8L445.7,171.8L447.7,168.1L451.7,166L456.8,164.9L458.8,164.9L460.8,163.8L465.8,162.7L468.8,161.6L471.8,161.1L471.8,156.2L476.9,157.1L480.9,159.9L484.9,162.2L486.9,164.9L488.9,161.6L485.9,156.5L484.5,150.5L485.9,146.2L488.9,139.6L490.9,134.2L496,137.6L496.6,146.2L496,155.3L497,163.8L495,171.8L493,174.3L496,175.4L498,169.2L499,163.8L500,155.3L499,146.2L501,139.6L506,139.6L507,141L512.1,132.8L512.1,141.6L516.1,149.3L517.1,152.3L518.1,146.2L514.1,136.3L519.1,130.6L525.1,125.5L529.2,117.7L537.2,113.6L545.2,112.8L551.3,109.4L559.9,98.6L564.4,103.2L567.4,107.6L573.4,107.6L578.4,113.6L578.4,117.7L576.4,125.5L569.4,130.6L564.4,136.3L571.4,134.2L578.4,132.8L582.5,131.3L588.5,134.9L595.5,136.3L598.5,132.8L603.6,131.3L607.6,133.5L610.6,137.6L609.6,144.2L613.6,149.3L617.7,145.5L622.7,145.5L626.7,146.8L631.3,146.2L631.7,139.6L636.8,139L641.8,140.3L645.8,141L650.8,141.6L652.9,146.2L656.9,149.9L662.9,149.3L667.9,149.9L672,155.3L677,157.1L680,157.1L685,158.2L688.1,155.3L693.1,154.7L693.1,161.1L695.1,155.3L699.1,155.9L704.1,156.5L709.2,158.8L712.2,161.6L716.2,164.9L720.2,167.6L724.3,170.2L728.3,171.8L732.9,176.3L730.3,179.3L727.3,184.5L724.3,185L720.2,179.3L714.2,176.8L712.2,181.7L709.2,184.1L707.2,186.4L709.2,190.9L711.2,193.9L706.2,193.5L701.1,196.1L696.1,199.4L693.1,203.5L688.1,202.3L684,203.5L681,204.3L679,207.5L678,211.3L676,212.1L678,216.9L676,222.3L673,224L672,227.4L669.3,229.1L667.9,232.4L665.3,236L663.9,232.4L663.1,225.7L663.1,218.7L664.9,214L667.9,210.6L672,205.5L675,201.5L678,197.4L681,193.1L678,193.1L673,197.4L673,200.7L671,196.1L665.9,196.9L661.9,203.5L660.9,205.5L655.9,207.5L653.5,205.3L649.8,205.5L643.8,206.3L638.2,206.3L633.7,209.4L629.7,214L626.7,218.7L622.7,223L625.7,225.7L628.7,226.4L631.7,225.7L634.4,228.1L633.7,232.4L632.7,237.3L632.3,241.9L629.7,246.5L627.7,250L624.7,253.7L621.7,257.1L617.7,259.9L615.4,259L613,261.2L611.2,263.4L611,265.3L608.6,267.4L606.6,269.2L608.4,271.3L610.4,275.1L610.6,277.6L610,279.6L607.6,280.6L604.6,281.5L604.4,278.8L604.6,275.6L604.8,273.8L602.6,273.1L601.6,271.3L602.2,268.7L600.4,267.4L597.5,268.2L594.7,270.2L595.1,267.4L595.9,265.5L593.5,265.3L591.1,267.6L587.5,269.5L589.1,272.6L589.5,274.3L593.1,273.1L596.5,274.1L594.5,275.8L592.1,277.6L590.1,280.1L591.9,281.8L593.3,284.9L595.1,287.5L595.1,289.9L592.5,291.3L595.1,292.2L594.7,295.5L592.9,296.6L590.9,300.4L590.1,301.1L588.9,303.8L587.7,304.4L585.5,306.6L584.9,307.1L581.5,308.4L579.8,309.3L578.4,309.5L575.4,310.6L572.4,311.7L572,313.6L571,311.2L569.6,311L567.4,311L565,312.5L563.4,314.7L562.7,316.8L564.4,319.1L566,321L567.8,322.5L569.4,325.2L570,328.9L569.8,331.2L569,332.4L565.8,334.3L564.8,335.5L562.3,337.1L560.9,337.9L561.1,335.5L560.3,334.3L558.3,333.9L557.1,331.8L555.9,330.6L553.3,329.5L553.1,328.1L552.3,327.9L551.3,328.3L551.2,330L550.5,333L549.7,335.1L549.9,336.7L551.3,338.1L552.1,340.8L554.3,341.6L555.7,342.8L557.5,344.6L558.1,347.2L558.7,350.3L559.7,352.5L558.3,352.7L556.3,351.3L554.9,350.1L553.9,349.3L552.7,347.2L552.1,344.4L551.7,342.4L550.7,341.4L549.7,340L548.5,339.4L547.9,339.6L547.9,337.1L548.5,335.1L548.7,332L548.5,330L547.7,326.9L546.7,323.7L546.5,321.6L544.8,320.6L543.6,321.4L541.8,323.1L539.8,322.7L540.2,319.5L539.8,317.4L538.6,315.3L537,314L535.8,312.1L534.8,309.3L533.2,308.8L532.2,309.9L530.2,310.4L527.8,310.8L525.1,311L524.7,313.2L522.7,314.7L521.1,315.9L519.1,317.9L517.7,319.1L515.7,321.2L513.5,322.7L511.5,324.8L511.3,326.9L511.7,328.7L510.9,331L510.8,334.5L509,335.9L509.4,336.7L507.4,337.5L506.1,339L504.8,338.1L503.4,335.1L502.6,332.5L500.6,329.1L499.2,325.2L498.6,323.7L497.6,320.6L496.6,316.4L496.4,313.2L496.2,311L496,309.5L495.2,311.7L493,312.5L490.9,312.1L488.9,309.5L490.9,308.4L488.9,308.2L487.9,306.4L485.9,305.8L484.9,303.8L483.9,302.5L479.9,302.9L475.5,303.1L473.8,303.1L471.8,302.7L468.8,302.5L466.4,302L464.8,299.3L463.4,298.4L460.8,299.8L458.8,299.8L456.8,298.9L455.7,297.5L453.7,296.8L452.3,294.5L451.1,292L448.7,291.1L447.7,292L446.7,293.2L447.7,295.5L448.7,297.7L450.9,300L451.7,302.2L452.3,303.3L452.7,300.9L453.9,302.7L453.5,304.4L455.7,305.1L459.6,304.4L461.4,302.7L463,300.7L463.6,303.3L464.2,304.9L467.8,306.4L470.4,308.8L468.8,312.1L467.8,313.4L466.4,316.4L464.8,316.6L463.8,318.5L460.8,320.6L459,320.6L455.1,322.3L455.1,323.5L450.7,324.8L448.9,325.8L445.7,327.5L440.7,329.3L437.6,329.5L437,328.3L436.4,325.2L436,322.7L435.6,320.8L433.6,317.4L431.6,314.7L429,311L427.6,307.7L426.6,305.3L425,302.9L423.6,300.7L421.6,297.7L420.5,296.4L420.3,293.2L419.3,296.6L419.1,297.1L417.7,295.9L416.5,294.3L415.7,292.1L415.1,289L416.5,289.4L418.9,289L419.9,287.3L420.5,285.4L421.6,282.7L422.2,281.3L422.4,278.8L423,276.1L421.6,276.1L419.7,275.6L417.5,277.3L415.5,277.3L412.5,275.6L411.5,276.8L409.5,277.1L406.9,275.8L405.1,275.1L404.9,271.5L403,271.8L404.1,270L402.6,268.7L402.8,267.4L402.8,266.6L402.4,265.3L400.4,265L399.2,265L398,266.1L398.4,267.4L397,266.9L396.4,266.1L395.6,267.4L396.4,269.5L397.4,271L398.4,272.6L397.8,272.8L396.4,272.8L396.8,274.1L396.6,276.3L395.2,276.6L393.8,275.6L393,273.3L393.8,271.8L392.4,270.2L390.8,268.7L389.2,266.3L389.4,263.4L388.4,261.5L386.6,260.3L383.1,257.9L380.7,256.3L379.3,252.9L377.5,253.7L377.7,252L374.9,252.6L374.9,255.1L375.5,256.5L377.3,257.7L378.7,260.7L381.3,262.1L382.7,262.3L382.3,263.4L384.1,264.5L386.4,265.8L387.4,267.1L387,267.9L384.7,266.1L383.5,267.4L384.5,270L383.3,271.5L381.7,272.7L381.7,272L382.3,270L381.5,267.4L379.9,265.8L378.7,265.3L376.3,263.9L374.7,262.6L372.3,260.7L370.9,257.9L369.9,256.3L368.1,255.4L366.2,256.8L364.8,257.4L362.2,259L360.2,258.2L358.2,257.9L356.6,259.3L356.4,260.7L356.6,262.3L354.6,263.7L351.8,265.3L350.1,267.4L349.5,268.7L350.6,270.6L349.1,271.8L348.7,273.6L346.3,275.1L345.7,275.8L343.1,275.8L341.3,275.8L339.4,277.2L338.9,277.6L337.5,276.3L336.3,274.6L334.3,275.1L332.1,275.1L332.5,272.6L331.6,270.8L331,270.5L332.2,267.4L332.7,264.2L332.2,261.8L331.4,259.6L333.3,258.2L334.7,257.2L338.7,257.8L342.5,258.1L346.5,258.4L347.1,257.9L347.7,254.6L347.9,252.3L347.7,250.3L346.1,248.5L345.7,247.2L344.1,246.2L341.5,245.6L340.7,244.1L343.1,242.5L346.1,243L346.9,243L346.9,239.9L347.7,240.7L350.4,240.4L352.4,239L353.4,236.6L355,235.5L356.6,234.5L358.2,232.4L359.6,229.3L361.2,228.5L364.2,227.8L366.4,227.1L367.4,226.1L368.1,224.4L367.4,222.3L366.4,220.3L366.4,216.6L367.4,214.7L371.5,212.3L371.3,216.9L372.1,217.7L370.7,220.5L369.3,222.3L369.9,223L370.5,224.4L372.3,225.7L374.5,225.1L377.3,224L378.9,226.1L382.3,224.7L386.4,223L387.6,224.4L389.8,224.4L390.4,222.6L392.4,221.2L392.6,219.8L392.4,216.9L393.4,213.6L395.6,212.3L396.8,214.7L398.4,215.1L399.2,211.7L399.4,209.8L397.4,208.7L397.4,206.7L399.8,205.7L403.5,205.3L406.5,205.5L408.5,203.5L410.9,203.7L408.5,202.7L407.9,200.7L404.5,201.5L400.4,202.7L396.4,204.1L394.8,201.7L393.2,199L393.4,197.4L393,193.1L393.6,190.4L396.4,186.8L399.4,183.1L401.2,181.7L400.4,178.8L398.6,177.8L394.8,178.8L393.4,183.6L391,187.3L387.8,190.9L386.2,192.6L384.9,193.5L384.5,198.2L384.7,200.7L387.4,202.3L388.2,203.9L386.6,206.3L384.3,209L383.5,212.1L383.1,216.2L381.5,218L378.9,220.2L378.7,220.9L376.3,220.9L376.1,220.2L375.7,218.6L376.1,216.2L374.3,212.5L372.7,209.4L372.5,207.1L371.7,203.9L370.9,206.7L369.3,207.9L366.2,211L364.2,211.3L361.6,207.9L360.6,205.5L360.8,201.9L360.2,199L360.2,195.2L362.6,193.1L365.6,190.4L369.3,187.7L370.3,186.4L372.7,182.2L374.7,179.3L375.7,175.9L377.3,172.3L379.1,170.2L381.3,166.5L378.3,165.5L380.3,162.2L382.3,162.2L385.3,158.2L388.4,157.1L391.4,154.7L394.4,153.5L397.8,151.1ZM369.9,220.5L371.7,220.5L371.9,221.9L370.3,221.9ZM386.6,214L388.4,211.7L388,214L386.8,215.1ZM330,233.7L333.1,233.7L337.3,231.8L338.1,229.1L337.9,227.8L337.7,225.7L338.9,224L338.1,221.6L335.5,221.2L333.1,222.6L333.1,224.7L330,225.1L330,227.8L332,228.5L331,230.5L329.2,232.1ZM354.8,268.4L356.4,267.6L357,268.4L356.2,269.2ZM394,210.2L396.4,209L396.8,209.8L394.8,211.3ZM366.6,265L368.7,264.1L369.9,266.1L369.5,269.5L368.3,270L367,269.7L367,266.6ZM375.1,272.6L377.1,272L381.5,271.8L380.5,275.1L380.5,276L378.9,275.1L375.7,273.7ZM372.3,219.8L374.3,218.4L375.5,219.8L374.7,221.9L372.7,221.6ZM338.3,278.1L339.5,277.8L342.1,279.6L344.1,279.3L346.1,279.8L348.1,278.3L351.2,277.1L354.2,276.1L356.4,275.6L360.2,275.6L364.2,275.1L367.2,275.3L369.9,274.3L370.9,275.3L372.5,275.1L371.5,276.8L371.5,278.3L372.3,280.1L370.7,281.8L370.5,282.7L372.3,283.7L373.3,284.4L375.3,285.2L376.7,285.2L379.3,286.1L380.9,286.6L381.3,288.5L383.3,289.2L386.4,290.4L388.8,291.3L390.4,289.7L390.6,287.1L392.4,285.4L394.4,285.2L396.8,286.1L398.4,287.3L400.8,288.3L404.5,289L408.5,289.9L410.3,289.2L412.5,288.3L415.1,289L418.9,289L420.3,293.2L419.1,297.1L415.7,292.1L415.9,294.3L417.5,296.6L418.1,298.2L419.1,301.1L420.5,303.8L421.6,305.6L422,307.7L424.2,309.9L425,312.1L425,315.1L425.6,317L427.6,318.5L428.6,321.6L429.6,323.5L431.6,325.2L433.6,327.3L436,328.9L437.2,330L436.8,331.8L437.6,333L438.6,334.1L442.7,333.4L445.7,332.8L448.7,332.4L451.7,331.4L453.3,331.3L453.5,334.3L452.3,337.1L450.7,340.2L448.7,343.2L446.7,346.2L443.7,349.3L441.3,351.3L438.6,353.3L435.6,356.1L433.6,358.7L432.4,359.9L430.8,361.7L430,363.4L429,365.4L428.2,367.4L429.2,369L429.6,371.4L429.6,373.5L430.6,375.5L431.6,376.9L431.8,380.6L432,384.8L432.2,385.8L430.6,388.3L428.6,390L425.6,391.7L424.4,392.1L422.6,394.2L420.3,395.9L420.5,398.5L421.6,400.7L421.6,404.6L420.5,406.6L417.5,407.9L415.7,409.4L416.3,411.3L415.7,414L414.5,416.1L412.5,418.4L410.5,421.4L407.5,424.7L406.3,425.7L403.5,427.6L401.6,428.1L398.4,428.3L394.6,428.6L390.4,430L388,429.1L387.2,428.8L387.2,427.9L386.4,425L387,422.6L385.3,419.8L384.3,417L383.3,415.4L381.7,412.9L380.7,410.8L380.1,407.3L379.3,404L379.3,402.6L378.3,399.6L376.9,397.4L375.3,394.2L373.9,391.7L373.8,390.5L373.9,387.9L374.7,386L375.3,383.7L377.1,380.8L377.9,378.6L377.9,376.5L376.7,373.5L375.9,370.4L374.9,367.6L374.7,366.4L373.9,365L372.3,363.2L370.3,361.1L368.9,359.1L367.8,356.7L368.9,355.3L369.3,354.5L369.5,352.3L369.9,350.3L370.1,348.7L369.7,347.4L368.1,346.2L366.8,346.2L364.2,346.4L362.2,346.6L360.2,344.2L359.2,342.6L357,342.4L355,342.6L352.6,343L350.1,344L349.7,344.2L346.1,345.6L344.1,345L342.1,344.6L338.1,345.6L335.1,346.4L332,345.2L328.4,342.6L327,341.4L325,340.2L323.6,338.1L322.6,336.1L321,334.1L320,333L318,331.2L316.6,330.2L316.4,328.1L316,326.2L315,325.3L317,322.7L317.4,319.5L318,318.3L317.6,315.5L316,312.3L317,309.3L318,306.2L320,303.3L321,300.9L323,298.9L324,296.8L327,295.5L329.6,293.4L330.6,291.1L330.4,288.5L331.6,286.1L333.1,284.2L334.9,283.5L336.5,282.5L337.5,280.1ZM449.3,379.6L451.1,382.7L451.7,386.4L450.3,389L449.7,391.1L449.5,392.5L448.3,396.4L447.3,400.7L445.9,404L444.7,407.3L441.7,408.6L438.6,407.3L437.8,403.7L437.2,400.7L438.4,397.4L439.3,395.3L438.6,392.1L438.6,390L439.7,388.3L443.3,387.3L445.7,385.4L446.7,382.7L448.1,380.6ZM457.4,329.8L459.8,329.8L458.8,330.4L457.6,330.4ZM210.8,538.8L213.4,538.8L213,543L211,541.9ZM205.3,549.5L209.4,550.7L210.4,558.3L203.3,558.3ZM235.5,521.1L232.5,522.4L228.5,524.2L225.4,527L222.4,529.9L219.4,533.8L216.4,538.8L214.4,544.1L213.4,549.5L213.4,558.3L227.5,558.3L225.4,549.5L220.4,544.1L221.4,538.8L225.4,533.8L227.5,528.9L231.5,525.2L234.5,523.3ZM440.7,558.3L442.7,543L448.7,538.8L452.7,533.8L458.8,533.3L464.8,536.8L470.8,540.9L476.9,541.4L484.9,543L490.9,547.9L495,558.3ZM507,558.3L511.1,544.1L517.1,539.8L527.1,537.3L535.2,536.3L541.2,536.8L551.3,533.3L559.3,533.3L567.4,536.8L572.4,535.2L577.4,532.8L583.5,536.3L591.5,537.8L599.6,536.3L607.6,538.8L613.6,534.7L621.7,534.7L625.7,535.7L631.7,537.3L637.8,538.8L643.8,542.5L651.8,546.2L659.9,548.4L667.9,551.2L676,558.3ZM636.8,376.9L638.8,380.6L639.4,384.4L642.4,385.8L643.4,389.8L644.2,393.2L645.4,394.8L647.8,396.4L650.2,398.7L652.9,401.8L653.9,404.6L656.9,406.8L658.3,408.4L658.1,412.9L659.1,415.5L657.9,419.8L656.9,423.3L655.5,425.4L654.3,427.9L653.3,431L651.8,435.5L651.7,436.8L647.8,437.8L644.6,440.9L641.8,439.1L638.8,440.1L634.8,438.8L631.7,436.5L630.7,433L628.7,432L628.7,430.3L627.7,428.6L625.7,431L626.7,425.7L627.3,424.5L623.7,430L621.7,428.1L620.1,425.7L619.1,423.5L615.6,423.3L613.6,422.1L609.6,422.6L605.6,424L601.6,425.2L599.6,426.2L598.5,427.9L595.3,427.9L591.5,428.1L587.5,430.5L583.5,430.3L581.7,428.8L581.5,427.1L582.9,426.4L583,423.3L581.5,419.3L580.6,415.8L579.4,412.9L578.2,409.5L578.8,407L578.6,402.9L579.6,400.2L580.6,400.2L582.5,399.4L585.1,397.7L588.7,397L591.5,396.2L594.5,393.8L595.9,392.1L596.5,389.6L598.8,390.6L600.6,387.9L602.6,384.8L605.6,383.5L608,385.8L610.6,385.6L611.6,382.7L613.3,380.5L615.6,380L616.7,378.4L618.7,379.2L621.7,379.8L625.3,380L623.7,382.7L623.3,385.4L624.7,387.5L627.7,389.2L630.7,391.1L633.3,391.1L634.8,386.9L635,382.7L635.6,380.6L636.2,377.6ZM561.9,358.9L563.8,358.3L564.8,360.9L563.4,360.5ZM570.6,351.3L572,351.9L574,350.7L577.4,348.9L579.4,346.2L581.5,345.2L583.7,343.2L585.1,341.4L586.7,342.2L587.7,343.6L589.9,344.8L588.7,346.4L587.3,346.8L586.7,348.7L587.5,350.9L589.5,353.3L587.5,353.7L586.5,355.3L585.9,356.3L585.1,357.9L584.5,359.9L583.5,362.5L580.6,363.6L580.4,362.1L577.4,361.7L575,362.1L571.8,361.1L571.4,357.9L569.8,355.9L569.4,353.3L570,351.9ZM661.1,366.2L663.5,368.4L662.5,369L661.1,367.2ZM603.6,361.7L605.6,361.5L606,362.5L604.2,362.9ZM706.8,391.1L709.2,391.1L709.4,392.3L707,392.3ZM709.8,389L712.2,388.3L711.8,389.6L710,389.8ZM568.8,315.9L570.4,314.2L572.6,314L573.4,315.1L572.2,317L570.4,318.1L568.8,317.4ZM606.6,351.3L607.6,352.3L609,353.3L607.6,354.7L608,356.9L607,355.3L606.6,353.3ZM36.4,316.4L38.4,314.9L36.8,313.8L36.4,315.1ZM631.3,261.5L632.3,258.5L634.6,258.5L635.2,255.1L635.4,252.4L637.8,254.9L640.4,256.5L642.4,255.7L643,258.5L640.6,259.5L638.4,262.1L635.8,260.7L633.7,261.2L632.7,260.7L633.7,262.7L631.9,263.7ZM633.5,263.4L634.8,266.1L635.8,268.4L634.8,271.8L633.7,275.1L632.9,277.6L633.5,278.3L631.7,280.1L631.1,278.8L630.1,279.6L629.5,281L628.7,280.1L628.1,281L625.7,281L625.5,281.8L624.3,282.7L623.3,283.8L621.9,282.5L622.1,281L619.7,281L617.7,281.8L616.2,281.8L613.6,282.5L613.6,281.5L615.6,280.3L617.1,279.1L618.3,278.6L620.3,278.7L622.3,278.3L623.7,278.3L623.7,276.8L625.1,275.1L626.3,273.8L625.7,275.6L627.7,274.8L629.3,273.1L631.1,270.2L631.7,267.6L631.5,265.8L632.3,264.2L633.3,265L633.7,263.9ZM561.7,369L563.4,367.2L565.2,367.6L568,368L572.2,369.2L573.4,368.2L576.6,369.2L580.2,371L580.4,372.9L577.4,372.1L573.4,371.8L569.4,370.8L567.4,370.8L564.2,370ZM488.5,468.7L491.9,469L491.5,470.8L488.9,470.5ZM643.8,255.1L649.4,252.3L647.8,253.2L644.8,255.7ZM662.5,238.2L664.3,236.3L663.5,238.2ZM613.6,282.7L615,284.2L615.4,285.6L614.4,287.5L613.8,289L613,289.7L612.8,288.3L612,289L612,287.1L611.6,285.6L610.8,284.4L611.6,283.7L612.4,283.5ZM580.4,371.6L584.9,372.1L589.5,371.8L593.5,372.3L597.5,371.8L597.1,372.7L591.5,373.1L585.5,373.5L581.5,373.1ZM592.7,317.3L595.9,317.4L596.1,320L595.9,322.1L594.7,323.1L594.7,325L596.5,326.4L598.1,327.1L599.4,327.3L599.8,329.8L598.1,328.9L596.7,328.5L596.5,327.7L594.9,327.1L592.7,327.3L592.7,326L593.3,325.6L592.5,325.2L591.7,325.2L591.3,323.1L591.1,322.1L592.1,321.4L592.3,319.5ZM602.4,335.5L604.2,338.1L604.8,340.6L604,342.6L603,341.2L602.4,344L600,342.8L599.6,340.8L598.1,340.2L595.7,341.4L595.7,339.6L597.5,338.1L598.3,337.7L601,338.1L601.6,337.1ZM592.1,328.1L593.9,328.1L594.5,329.8L593.9,330.6L593.1,329.5ZM648.6,366.4L651.8,365.4L654.9,363.8L656.7,364L655.9,366.4L652.9,367.8L649.8,367.8ZM680,396.6L683,398.5L686,401.3L685,401.3L682,399.6ZM613.6,356.9L616.7,356.1L619.9,356.9L620.3,359.3L620.7,360.9L622.7,361.9L624.7,359.7L626.7,358.5L627.7,358.5L630.7,359.7L633.1,360.3L635.8,361.3L639,362.3L641.4,363.2L643.4,365.8L645.8,367.4L647.4,367.6L647.5,368.6L645.8,368.8L647.8,371.4L649.8,373.5L651.8,375.3L653.7,375.9L651.8,376.7L648.8,375.7L646.2,374.5L643.8,371.8L640.8,370.6L638.8,372.1L636.8,373.9L633.7,373.7L630.7,371.6L627.7,372.3L629.3,369.4L628.7,367.4L626.7,365.4L623.7,364.4L620.7,363.2L617.7,363.4L617.3,360.9L618.7,360.1L615.6,359.5L613.6,358.1L613.4,357.1ZM653.3,360.5L655.9,361.7L657.9,364.4L657.1,363.8L654.9,361.7ZM697.5,429.1L699.9,431L701.3,433L702.1,435.3L703.1,434.3L703.9,436.8L706.2,437.8L709.2,437L708.2,439.8L706.2,441.6L705.8,444.3L702.7,447.5L701.7,446.7L702.5,443.7L701.1,442.4L699.7,441.4L701.3,440.1L701.7,438L700.7,434.3L698.1,431ZM697.5,444.5L699.7,445.6L700.7,446.4L700.1,448.3L699.5,449.6L697.7,452.1L698.3,453.5L694.7,455.2L693.5,459.5L691.1,461.5L688.9,461.5L687,460.3L685,459.2L686,456.9L688.1,454.6L690.1,453.2L692.5,451.3L694.5,449.6L695.1,447.7L696.3,445.3ZM585.9,338.3L587.5,337.1L589.5,335.1L590.5,333.2L590.9,332.2L590.1,333L588.5,335.5L586.7,337.1ZM595.5,331.4L597.7,331.8L598.5,334.1L598.1,336.9L596.3,335.9L596.5,334.1L595.5,334.1L595.3,333ZM637.2,224.4L637.8,227.4L638.4,232.4L639.2,238.8L641.2,242.5L637.8,241L637.4,246.5L638.8,249.4L638.6,250.9L636.8,248.8L635.8,250.9L635.8,246.5L636.2,241.9L635.4,237.3L635.2,232.4L635.4,228.1ZM600.2,330L602.2,330L603,332.6L602,334.7L601.2,334.7L600.4,333L600.6,331.6ZM607.6,361.3L610.6,360.9L613.2,362.1L610.6,362.3L608,362.1ZM615.6,284L617.3,282.5L618.9,282.3L620.3,281.8L621.1,282.5L620.1,284.2L618.7,283.7L617.7,285.5L616.7,284.9ZM671,374.1L673.6,375.3L673,374.1ZM273.7,484.9L277.7,486.2L277.3,487.6L274.7,486.2ZM510.9,335.5L512.7,337.1L513.7,338.1L514.9,340.6L514.5,342.2L512.3,343.4L511.1,342.8L510.8,341.3L510.7,339.2L510.9,337.3ZM227.5,518L233.5,514.9L234.1,515.8L228.5,518.8ZM687,462.4L688.5,462.1L688.3,463.3L687.2,463.5ZM591.5,353.7L593.5,352.7L596.5,353.3L599.6,353.3L602,352.1L600.6,354.5L597.5,354.3L594.5,354.3L592.1,354.3L591.5,357.1L593.5,358.1L594.7,357.1L597.9,356.5L598.3,357.1L597.1,358.5L595.5,358.7L594.5,359.3L596.1,361.3L597.3,363.6L596.5,365L595.1,365L594.5,363.8L593.5,362.3L593.3,360.7L592.3,361.3L592.3,363.4L592.3,366.4L590.5,366.4L590.5,363.4L589.1,360.9L589.9,359.3L590.1,357.7L591.1,356.9L591.1,354.9ZM541.8,344L546.3,344.8L548.7,347.7L551.1,349.5L552.1,350.7L554.3,351.9L557.1,354.7L558.9,357.3L561.1,359.9L563.4,361.3L562.9,364.4L563.1,367L560.5,367L559.1,365.6L555.9,363.2L553.3,360.3L552.1,357.3L549.7,354.7L548.7,351.9L545.7,348.9L543.4,346.8L541.8,344.8ZM589.5,374.3L591.9,374.3L593.1,375.9L590.7,375.5ZM594.5,302.7L595.5,303.3L594.7,305.6L593.5,308.4L593.2,310.1L591.9,308.2L591.7,306.6L592.9,304.4L593.5,303.3ZM641.2,445.1L644.8,446.1L648.4,445.6L648.4,448.5L647.8,451.8L645.4,452.9L642.8,451L642.2,449.1L641.2,446.4ZM598.5,376.1L601.6,373.3L606,372.3L603.6,374.1L600.6,375.7Z" fill="#f2efe9" stroke="#f2efe9" stroke-width=".5" stroke-linejoin="round"/><path d="M66.6,157.4L66.6,202.3L70.6,203.1L73.6,207.5L77.6,204.7L81.6,209.4L85.1,216.6L88.7,218.7L88.3,222.3M102.4,241.9L158.7,241.9L159.5,241L165.1,244.1L170.1,245L172.3,244.1L179.6,248.2L180.2,249.4L182.2,251.4L184.2,252.9L184.4,259.3L184.2,260.7L183,262.1L184.2,262.9L191.3,259.9L191.1,258.5L192.3,257.7L196.3,256.3L199.9,253.7L206.3,253.7L207.7,252.6L208.8,250.3L209.4,248.8L211,246.6L212.8,246.9L213.8,247.6L213.8,251.7L214.6,253.2L215.4,254.3M114.6,286.1L119.5,285.6L126.9,289L132.5,289L132.5,287.8L135.9,287.8L139.2,290.6L141,293.6L142.8,294.3L144.2,292.5L146.2,292.5L148.4,295.9L150,297.7L150.8,300.2L154.6,301.2M164.7,325.8L164.7,324.4L165.7,322.5L168.3,322.5L166.3,320.1L167.1,320.1L167.1,318.9L170.8,318.9L172.5,317.4M170.7,318.9L170.7,322.9L171.3,322.9M170.5,326L172.1,324.8L172.8,323.3M168.9,327.4L170.5,326L173.6,328.1M174.6,328.9L175.8,327.3L177.8,326.9L179.8,325.2L182.8,324.8M177.8,332.8L179.8,333L181.8,333.2M183.4,339L183.4,337.1L184,335.9M206.7,331.4L204.3,332.8L203.3,336.5L204.5,338.3L205.3,341.2L209.2,341.2L210.6,343L214.4,342.8L213.8,346.2L214.8,348.5L213.8,349.7L215,350.9L215.6,352.9M191.7,352.5L193.7,353.7L196.7,354.5L198.7,355.5L201.3,357.3L203.3,359.9L205.7,359.7L209.2,360.7L209.5,363.8M215.6,352.9L215.2,351.9L209.8,351.9L209.8,353.1L211,353.3L210.6,357.5L209.5,363.8L203.5,365.8L201.5,370L203.5,374.3L208.4,374.5L208.2,377.6L210.2,377.5M188.6,362.1L188.4,364.2L191.3,365.4L192.5,362.1L196.1,360.5L198.1,358.3L198.7,355.5M210.2,377.5L212,380.6L211.4,381.7L211.4,385.8L210.2,386.9L211.4,388.3L210.4,391.1L208.6,392.9M210.4,391.1L212.4,394.2L212.4,397.4L213.6,402.4L215.4,402.9L212.8,406.2L212.4,411.7L210,415.1L208.8,420.9L209.4,426.4L208.4,431.3L207.3,436.8L206.3,441.9L205.7,448.5L205.9,455.5L205.3,462.7L203.3,470.2L204.7,474L205.3,478.2L212.6,479.1M212.2,480.1L212.2,488M215.4,402.9L217,400.2L220.8,402.4L224.2,401.1L224.8,397.4L231.3,394.9L233.1,396.8M210.2,377.5L213.4,376.9L218.8,375.1L218.6,379L220.6,380.6L223.8,381.7L227.5,382.7L228.9,385.8L229.1,388.5L232.7,388.5L232.7,390.6L234.5,392.1L233.1,396.8L233.9,400.9L238.1,401.3L238.7,405L240.9,405.3L240.3,408.6M224.2,401.1L227.5,404.6L232.1,406.8L234.3,408.1L232.3,412.2L236.7,412.6L237.9,412.6L240.3,408.6L241.9,409.9L241.9,412.2L237.9,414.9L234.3,419.1M234.3,419.1L237.5,420.5L240.5,422.3L242.5,424.5L242.7,427.4M234.3,419.1L233.1,424.5L232.7,428.1M215.6,352.9L218.4,353.7L221.4,352.3L221.4,350.3L223.4,347.7L220.4,347L223.8,347.7L227.5,346.2L228.1,344.8L226.7,343.4L227.3,341.8L228.9,341L229.5,338.1M228.1,344.8L229.7,346.2L230.5,348.3L229.5,351.3L231.5,352.7L233.5,352.3L235.5,351.5L236.5,351.5L237.7,351.3L240.3,350.7L243.5,350.9L244.6,350.1L246.2,347.2M235.1,343.2L234.9,345.2L233.5,347.2L236.5,351.5M241.5,343.6L240.5,346.2L241.5,348.3L240.3,350.7M345.7,279.8L346.7,283.7L347.7,286.8L344.1,288L342.7,289.9L340.1,292L336.1,293.2L332.7,295L332.7,298.2L340.5,303.3L352.6,311.9L353.8,313.6L356.6,314.7L356.6,316.4L358.7,316L361.8,315.3L365.2,312.3L374.3,306.6L370.1,304.4L370.1,300L369.3,291.5L368.3,287.1L365.2,283L366.8,280.1L367.4,275.3M324,297.3L332.7,297.3M332.7,301.1L326,301.1L326,306.6L324,307.7L324,311.4L316,311.4M369.3,291.5L370.9,288L373.3,286.1L373.3,284.4M400.8,288.3L400.4,293.8L400.4,309.9L400.4,314.2L398.4,314.2L398.4,315.3L382.3,306.8L380.3,307.7L378.7,308.6L374.3,306.6M400.4,309.9L424.4,309.9M340.5,303.3L337.1,313.2L338.9,321.6L339.1,323.7L331.4,323.7L328.2,324.6L326.4,325L325.6,325.4L323.4,322.7L321,321.4L317,322.7M325.6,325.4L327.2,330.2L322.6,329.8L316.6,330.3M316.4,327.7L320,327.3L322.4,328.1L320,328.5L316.4,328.7M327.2,330.2L331.4,330.4L334.1,334.7L333.5,340L329.4,338.1L327.4,335.1L323.4,337.1M329.4,338.1L327,341.4M333.5,340L335.1,346.4M320,333L322.6,331.6L322.6,329.8M334.1,334.7L337.7,334.1L339.1,334.3L344.5,335.7L343.9,345M344.5,335.7L344.5,333L350.1,332.8L351.4,338.1L352.6,343M352,333L353.4,342.8M357.4,331.6L355.6,342.4M352,333L355,330.6L357.4,331.6M339.1,334.3L341.3,329.5L343.7,327.5L348.7,324.8L350.6,324.9L352.2,328.1L355,330.6M350.6,324.9L357.2,323.9L358.7,320.8L358.7,316M357.4,331.6L358.2,327.9L364.2,328.9L368.3,329.3L371.7,328.1L377.5,327.5L381.3,320.8L382.3,313.2L380.3,307.7M377.5,327.5L378.5,328.9L379.3,332L376.3,336.1L373.9,341.2L370.3,342.2L367.4,345.6M378.5,328.9L380.3,332L381.3,335.3L380.7,340.2M380.7,340.2L383.9,340L387.6,339L388.4,337.1L392.4,335.7L396.2,333.2L395,329.5L394.4,327.3L396.4,323.3L398.4,323.3L398.4,315.3M380.7,340.2L379.3,344.2L382.5,350.9L376.9,350.9L372.9,350.9L369.9,350.7M372.9,350.9L372.9,353.3L369.5,353.3M376.9,350.9L378.3,352.5L379.3,356.5L379.1,359.1L376.3,360.1L373.3,360.1L372.5,363.2M387.6,348.3L386.6,350.7L386,356.3L382.7,359.7L380.9,364L379.1,365.2L376.3,364.6L374.3,365.4M382.5,350.9L383.5,348.3L387.6,348.3L389.4,345L395.4,347L399.4,345L405.3,345M396.2,333.2L397.8,337.7L400.4,339.8L405.3,345L409.5,346.4L412.3,348.3L418.5,346.8L422.4,346M398.4,337.7L400.4,334.5L406.5,336.5L408.5,335.1L414.5,331L416.9,330.6L416.5,334.1L418.7,336.1L418.7,333.4L420.7,331L422.8,329.5L423.6,326.2L424.6,320.6L427.8,318.5M423.6,326.2L426.6,325.6L428.6,325.6L432.2,326.6L435.4,330L436.8,329.5M435.4,330L434.2,333L436.4,333.2L437.2,332M436.4,333.2L438.6,337.1L444.7,339.2L446.7,339.2L440.7,345.2L436.6,346L434.4,347.3L432.2,346.8L429.6,348.5L426.8,348.1L422.6,346.3L422.4,344.6L419.5,341.8L416.5,339.2L418.7,336.1M434.4,347.3L432.6,349.7L432.6,356.9L433.8,358.7M418.5,346.8L419.5,349.1L420.5,351.9L418.5,354.9L418.3,357.3L425.8,361.3L426,362.3L429,364.8M412.3,348.3L412.1,350.7L413.1,351.1L409.9,353.7L409.7,358.1L411.5,357.3L418.3,357.3M409.7,358.1L408.5,360.7L409.1,364.2M411.5,357.3L412.1,360.1L410.5,364.2L409.3,364.2M408.5,360.7L411.5,360.1M431.4,376.5L426.6,378.2L422.2,378.8L420.3,378.8M412.1,372.1L416.3,374.3L418.5,374.5M420.3,378.8L419.7,382.7L422.2,384.8L422.2,387.9L421.1,390.2L419.1,387.9L419.5,384.8L416.9,383.7L416.5,380.6L417.1,377.2L416.3,374.3M416.9,383.7L411.3,387.1L416.3,389.4L416.1,394.2L415.5,399.2L413.1,401.5L414.5,406.2L414.3,409.3L414.7,411.3L416.3,411.4M413.1,401.5L409.3,401.1L405.9,397.4L402.4,394.2L401,391.7L404.5,391.9L408.3,387.7L411.3,387.1M412.1,372.1L408.3,372.5L407.3,374.1L407.9,376.7L407.3,379.4L410.1,380L410.1,382.5L408.3,382.5L404.9,378.8L401,378L399.2,378.4L398.4,377.4L398.4,381.7L394.4,381.7L394.4,388.3L397.2,391.3M374.7,367.2L383.5,367.2L384.3,370L389.4,369.4L389.4,371.4L394.2,370L394,378L395,378L398.4,377.4M373.8,390.5L378.3,390.8L387.2,390.8L393.2,392.1L397.2,391.3L401,391.7M392.4,392.7L392.4,400.7L390.4,400.7L390.4,406.8L390.4,414.9L385.1,415.6L383.3,415.4M390.4,406.8L391.8,411.5L394.4,411.1L396.4,407.9L401.6,408.8L404.3,405.7L404.5,404.2L409.3,401.1M404.5,417.7L407.7,415.4L409.3,417.7L406.5,420L404.5,417.7M332.5,262.3L333.7,261.8L336.9,262.3L337.7,263.1L336.3,264.7L336.1,268.2L335.1,268.4L336.1,272L335.3,274.6M346.5,258.4L351.6,260.1L356.6,261M365.2,257.1L364.2,255.7L364,253.4L364.2,251.1L362.4,250.3L362.4,249.4L364.2,246.8L365.4,246.2L366.6,241.9L363,240.4L361.8,240.4L359.8,238.8L358.6,238.8L356.2,236.3L355.2,235.3M357,234.4L360.2,234.4L362,235.7L362.2,236.3L362.2,233.1L363.8,232.8L364.2,231.1L364.6,228.1M362.2,236.3L363,237.9L362.4,240.4M367.4,222.6L369.9,223M378.9,226.1L379.5,231.1L379.7,234.1L380.3,236L376.3,237.6L374.5,237.9L377.9,242.5L376.3,244.1L376.3,246.5L371.3,246.5L369.5,246.5L365.4,246.2M364.2,251.1L367.2,250L368.3,251.1L371.1,249.1L371.3,248.2L369.5,246.5M371.3,248.2L374.7,247.9L377.7,249.4L377.7,252M377.9,242.5L380.3,241.9L384.1,243.1L384.5,245L383.3,247.9L382.5,248.2L377.7,249.4M380.3,236L383.3,237.9L385.8,237.9L388,240.4L390.4,241.3L395.6,241.6M384.1,243.1L388,240.4M395.6,241.6L398.4,236.9L397.6,234.1L397.6,230.5L397.4,225.7L396,224.4L389.6,224.2M397.4,225.7L401.4,225.1L403.7,219.8L398.4,217.7L392.4,218.4M396,224.4L396,221.9L392.8,221.2M399,211.7L402.4,212.1L405.3,213.2L405.3,208.3L406.5,205.5M405.3,213.2L406.9,218L403.7,219.8M406.9,218L412.5,222.3L415.9,227.4L414.1,232.1L419.3,234.7L421.8,237.6L426.6,239.1L430.8,240.1L430.2,245L427,247.6M397.6,234.1L404.5,233.4L411.7,234.7L414.1,232.1M395.6,241.6L394.8,243.8L396.2,245L400.2,245.9L403.7,244.1L408.9,245L410.7,249.7M403.7,244.1L406.9,252.3L409.7,253.2M396.2,245L392.4,250.3L391,250.6L393.2,254.3L395.8,256L400.4,257.4L404.5,256.3L407.7,257.4M384.5,245L388,245.6L391.4,243.5L394.8,243.8M382.5,248.2L383.3,249.4L384.9,251L388.2,251.1L391,250.6M377.5,252.3L380.9,252.3L383.3,249.4M381.7,253.2L384.3,253.2L388.4,254L389.2,257.9L387.4,260.7L385.5,259.3L382.3,256L381.7,253.2M388.2,251.1L388.4,254M389.2,257.9L391,259.9L390.4,260.4L389.2,262.3M391,259.9L393.4,261.2L395.2,261.2M395.8,256L395.2,261.2L396.2,263.8L399.4,263.4L403,262.9L406.5,262.1M403,262.9L402.4,265.5M390.4,268.2L392.4,265.3L396.2,263.8M389.2,262.3L391.4,261.5L391.6,264.5L392.4,265.3M391.6,262.3L395.2,261.2M373.3,207.5L373.9,204.3L374.9,199.4L374.5,188.6L378.3,184.1L379.3,176.3L382.3,169.2L386.6,163.8L391.4,160.8L397.4,162.7L401.8,161.1L402.4,155.9L406.5,155.3L408.5,161.1L412.1,156.5M391.4,160.8L397.4,169.2L398.6,177.8M408.5,161.1L407.5,165.5L410.5,168.1L408.7,172.3L410.7,178.3L409.9,182.6L413.5,191.3L406.1,201.5M333.7,224L335.5,225.4L337.5,225.4L335.5,222.3M423,277.6L424,275.6L426.6,275.6L430.6,275.6L435.2,274.6L440.3,274.6L439.3,271.3L438.6,269L440.3,268.2L437.8,266.3L437.6,264.5L433.6,263.4M430.6,258.2L435.6,258.8L439.7,260.1L443.7,262.6L447.9,262.6M437.6,264.5L440.7,263.9L443.7,262.6M440.7,263.9L443.7,268.7L443.7,270.2M440.3,268.2L443.7,270.2L446.7,268.2L448.5,271.5M435.4,274.8L432.6,281.5L428.2,284L424.2,286.6L422.2,285.6M422.4,280.9L423.8,282L422.2,284.2L420.7,284.7M421.8,285.6L421.6,288.5L420.5,293.2M418.9,289L420.3,293.2M420.5,293.4L422.8,293.8L425.6,292L426.6,290.8L424.6,288.5L429,286.9L428.2,284M429,286.9L434.6,289.4L440.1,293.8L443.7,294.1L446.1,291.8L446.7,292M443.7,294.1L445.7,295.5L447.5,295.5M440.3,274.6L442.7,278.1L441.5,282.5L443.1,284.9L446.3,287.8L446.7,290.8L447.7,292M436.2,321.9L437,319.8L439.7,319.8L444.7,320.6L446.7,318.1L448.9,317.2L454.7,316.4L460.8,314.2L462.2,309.9L461.2,308.4L455.9,308L453.9,305.1M454.7,316.4L457,321.3M461.2,308.4L462.4,305.1L463.6,303.6M452.3,304L453.1,304.2M458.6,274.3L461.8,272.6L465.2,271.8L469.4,273.8L473.2,276.1L473.2,278.6L472,281.8L471.8,283.2L472.6,288.5L474.5,290.1L472.6,292.5L476.5,296.1L476.5,298.4L477.5,299.8L474,302.9M472.6,292.5L475.9,293.4L483.5,292.2L483.7,289.9L489.5,287.5L490.9,284.2L493.2,282.3L494.2,276.6L500.8,274.6M473.2,278.6L475.5,279.3L479.9,276.8L483.9,274.2L486.9,275.1L489.9,273.6L491.3,272.8L494,272L494,275.8L500.8,274.6M487.3,306.2L493,304.7L490.9,300L490.9,297.1L495,296.4L498.8,292L500,289.7L501,286.6L499,284.9L499,280.8L505,280.1L506.6,278.8M500.8,274.6L503,277.8L506.6,278.8L509,281.8L509,286.1L508.4,289.2L513.1,291.5L519.1,294.5L523.1,296.6L527.3,296.8L529,298.2L531.2,295.9L534.4,297.1L539.2,294.3L542.2,294.1L545.9,295.9M513.1,291.5L511.3,294.8L515.1,296.8L519.1,298L522.7,299.8L527.3,300.2L527.3,296.8M529,298.2L529.2,299.3L535.2,299.2L534.4,297.1M545.9,295.9L545.2,298.4L541.6,301.1L540.6,303.3L537.8,305.6L538,309.3L536.4,311.4L535.8,312.7M529.2,310.4L528.8,307.3L527.3,304.4L528,300.2L530.8,300.7L530.8,302.7L536,303.3L533.6,305.6L533.6,306.9L535.8,306.2L536.4,311.4M545.9,295.9L548.7,297.7L548.7,301.6L546.5,304.7L549.1,307.3L549.7,309.7L553.5,310.4L551.5,313.4L547.3,314.9L546.7,318.5L548.7,322.1L547.7,324.8L549.7,328.9L550.5,331.4L548.7,334.7M553.5,310.4L555.5,309.1L559.3,308.4L561.9,307.1L564.8,309.9L567.4,311M555.5,309.1L559.3,313.4L561.3,316.4L564.4,320.6L566.4,324.8L566.4,325.4L566.6,330.4L563.4,333L560.3,334.3M551.5,313.4L553.7,315.3L553.7,319.5L555.5,318.3L559.3,317.9L560.9,321.6L562.5,326L566.4,325.4M562.5,326L557.3,326.2L556.3,327.7L557.1,331.6M551.7,342.2L553.3,343.6L555.5,342.8M570.6,351.3L572.4,353.5L575.8,352.5L579.4,352.5L581.5,350.3L583.1,346.6L586.7,346.8M633.7,360.5L633.7,373.7M599.6,374.1L601.6,373.9L601.8,374.5M448.7,249.7L444.7,245L443.9,243.5L444.7,241.3L444.3,237.9L448.1,236.9L452.3,233.4L457.8,234.7L462.2,236.9L467.8,235.3L473.8,236.3L470.8,232.4L472.8,226.1L481.3,224.4L488.9,221.2L493,225.1L498,225.7L504.6,224.4L506.8,228.1L511.3,236.3L517.9,235.7L521.7,240.1L525.7,241.3M525.7,241.3L522.5,247.3L517.1,247.3L515.7,252.3L511.9,254.3L511.5,261.5L503,259.3L498,259.3L493,260.4L492.8,261.2L488.9,263.9L486.9,264.7L483.9,262.3L482.9,259.3L474.9,257.9L468,252L462.8,253.7L462.8,263.9L460.2,262.1L455.7,262.6M462.8,263.9L464.8,263.9L467.8,260.1L470.8,261.5L474.7,264.5L479.9,270L483.9,274.2M511.5,261.5L504.8,264.7L498.6,267.9L498.6,268.7L500.8,274.6M492.8,261.2L494.6,263.9L497,265.3L493,266.9L489.5,265.3L491.9,268.4L498.6,268.7M486.5,269.5L487.7,272L486.9,275.1M491.9,268.4L486.5,269.5M525.7,241.3L533.2,237.6L539.6,236.9L547.3,238.8L547.9,232.4L555.7,234.7L555.9,236.9L565.4,238.2L573.4,240.7L580,237.9L584.9,239.5M525.7,241.3L526.7,243.1L533,252.9L542,255.7L544,260.1L553.3,260.7L561.3,263.1L570.4,260.7L575.2,257.4L575,253.7L582.5,252.6L584.9,250L591.1,248.8L587.5,245L582.7,245.3L584.9,239.5M584.9,239.5L590.1,237.9L593.1,228.1L598.5,227.4L603.6,230.1L606.6,238.8L612.6,242.2L613.6,245.9L621.1,243.8L618.1,253.7L613.6,254L614,259.3L612.8,261L607.6,262.1L605.4,262.6L600.4,267.4M603.8,273.1L608.4,271.0" fill="none" stroke="#cfaabf" stroke-opacity=".42" stroke-width=".7" stroke-linejoin="round"/><path d="M470.8,248.8L473.2,248.5L473.8,250L471.8,250.6ZM467.4,251.1L468.6,251.1L468.4,253.7L467.8,255.7L467.2,254ZM558.7,233.7L560.9,232.8L563.4,230.1L566.4,228.1L569,225.1L570.6,221.2L571.2,219.5L569.8,219.8L568.4,223.7L566,227.1L563.4,229.1L561.3,231.5L559.1,232.8ZM498.2,250.9L501,248.8L505,249.3L509,249.1L505,249.8L501,250L499,251.4ZM408.5,264.2L406.5,262.1L405.9,260.1L406.5,258.8L407.7,257.7L407.9,256L409.7,253.2L410.9,251.4L411.9,249.4L413.5,249.1L414.5,250L416.5,250.6L415.5,252.6L417.5,253.7L417.5,254.9L418.5,255.4L421.4,253.7L423.6,253.4L423.8,252.6L420.5,251.7L420.5,250.3L424.2,248.8L426.6,247.6L429.2,247.3L427.2,248.8L426.6,250.9L426.2,252.6L425.2,252.9L424.2,253.2L424.6,253.7L426.2,254.6L428.6,256.3L430,257.7L432.6,259.3L433.8,261.5L433.8,263.1L430.6,264.7L427.4,264.9L424.6,264.2L423.2,263.9L420.9,262.1L417.5,262.1L414.5,262.9L412.5,264.5L410.5,264.3ZM445.7,252L448.7,249.7L452.7,248.2L456.8,248.5L457.2,252.9L453.7,252.9L452.7,254.9L451.3,255.7L453.1,257.7L455.7,260.4L456.5,262.6L458.8,262.3L459.8,263.9L457.8,265L456.3,264.7L456.8,267.4L457.8,269.2L458.4,272.6L458.8,275.1L455.7,275.6L452.7,275.8L450.7,274.1L448.7,273.6L448.5,271.5L449.1,269.2L449.7,266.6L451.3,266.6L449.7,265.3L447.9,262.3L445.9,259.3L445.7,256.5L444.3,254.9L444.7,253.7ZM412.3,203.5L414.5,202.7L416.3,200.7L415.5,198.2L412.5,196.5L410.5,198.6L411.1,201.5ZM404.5,265.5L406.5,264.7L408.5,264.9L410.1,265.5L408.5,266.3L406.1,266.3L404.5,266.2ZM419.5,199.4L422.2,199.4L423,195.2L420.5,191.8L419.1,193.9ZM375.3,209.4L377.9,209L378.3,206.3L376.3,206.3ZM418.5,374.7L419.5,376.5L420.1,379.6L420.7,382.7L420.5,384.4L419.9,383.3L419.3,379.6L418.7,377.6ZM409.1,362.3L409.7,364.4L409.7,367.4L411.5,370.4L412.5,372.7L411.9,372.5L410.1,369.4L408.9,366.4ZM414.5,356.5L415.9,355.1L418.3,355.1L418.7,357.1L417.7,359.5L416.1,360.3L414.5,359.3ZM126.9,208.3L129.9,206.9L133.9,206.1L130.9,206.1L127.9,207.1ZM182.4,262.9L184.2,263.7L187.2,262.6L191.3,259.9L189.2,260.4L187.2,260.4L184.2,262.1L183,262.1ZM101.1,180.3L105.8,178.8L108.8,176.8L112.2,174.9L109.8,172.8L106.4,173.8L104.4,176.8L101.5,177.3ZM115.2,199.4L118.8,199.4L121.9,197.4L125.3,194.4L128.9,192.2L125.9,192.2L121.9,194.8L118.8,195.7L116.2,197.8ZM179.8,251.4L182.2,250.9L185.2,250.6L187.2,251.1L189.2,253.7L189.2,255.1L187.2,254.3L186.2,253.2L185.8,256.5L184.4,259.3L184.2,257.7L183.2,256.5L181.4,257.4L182.6,255.1L182.4,253.2L180.2,251.7ZM174.6,263.1L176.6,260.7L176.6,256.5L178.2,253.7L179.2,251.4L176.2,251.1L174.2,253.2L173.2,255.1L174.2,256.5L173.6,259.3L174,262.3ZM177.2,331L178.8,331.4L179.4,332.6L177.8,332.2ZM189.6,258.5L191.3,258.5L194.3,258.5L196.9,257.7L196.3,256L194.3,256.5L192.3,256.8L190.5,257.7ZM164.9,248.8L168.1,247.1L171.1,245L173.2,242.8L177.2,242.8L179.6,245.3L180.2,249.4L177.2,249.1L174.2,249.4L172.5,246.8L170.1,248.5L167.5,248.8ZM209.4,386.7L210.8,387.1L211.8,388.7L210.2,388.3ZM155.5,237.3L156.1,235L154.4,231.8L153.4,228.1L151.8,226.8L151.8,229.1L153.2,232.4L154.6,235Z" fill="#aad3df"/><path d="M0 174.4H713M0 355.3H713" stroke="#fff" stroke-opacity=".22" stroke-width="1" fill="none"/></svg>
<div class="mc s" style="left:424.2px;top:198.3px;width:30px;height:30px;background:rgba(252,252,120,.62)"><b style="background:rgba(250,250,92,.92)">2</b></div>
<div class="mc" style="left:518.2px;top:190.2px;width:40px;height:40px;background:rgba(233,164,52,.78)"><b style="background:rgba(238,163,33,.92)">362</b></div>
<div class="mc" style="left:597.9px;top:255.7px;width:40px;height:40px;background:rgba(233,164,52,.78)"><b style="background:rgba(238,163,33,.92)">311</b></div>
<div class="mc" style="left:482.1px;top:284.1px;width:40px;height:40px;background:rgba(233,164,52,.78)"><b style="background:rgba(238,163,33,.92)">223</b></div>
<div class="mc" style="left:558.0px;top:288.4px;width:40px;height:40px;background:rgba(233,164,52,.78)"><b style="background:rgba(238,163,33,.92)">613</b></div>
<div class="mc" style="left:310.2px;top:294.3px;width:40px;height:40px;background:rgba(240,190,62,.78)"><b style="background:rgba(240,188,45,.92)">115</b></div>
<div class="mc s" style="left:371.9px;top:322.3px;width:30px;height:30px;background:rgba(246,220,95,.68)"><b style="background:rgba(247,217,66,.9)">27</b></div>
<div class="mc s" style="left:387.8px;top:369.7px;width:30px;height:30px;background:rgba(246,220,95,.68)"><b style="background:rgba(247,217,66,.9)">51</b></div>
<div class="mc s" style="left:180.0px;top:338.7px;width:30px;height:30px;background:rgba(246,220,95,.68)"><b style="background:rgba(247,217,66,.9)">21</b></div>
<div class="mc s" style="left:213.7px;top:400.4px;width:30px;height:30px;background:rgba(246,220,95,.68)"><b style="background:rgba(247,217,66,.9)">43</b></div>
<div class="mc s" style="left:619.7px;top:401.2px;width:30px;height:30px;background:rgba(246,220,95,.68)"><b style="background:rgba(247,217,66,.9)">86</b></div>
<div class="mc" style="left:148.2px;top:249.0px;width:40px;height:40px;background:rgba(229,132,32,.82)"><b style="background:rgba(229,126,14,.95)">2.523</b></div>
<div class="mc" style="left:374.0px;top:248.0px;width:52px;height:41px;background:rgba(203,84,44,.8);color:#fff"><b style="background:rgba(209,66,12,.97);font-weight:bold;line-height:31px">549.583</b></div>
<div class="mc" style="left:405.0px;top:259.3px;width:47px;height:41px;background:rgba(203,84,44,.8);color:#fff"><b style="background:rgba(209,66,12,.97);font-weight:bold;line-height:31px">27.783</b></div>
<div class="pill" style="left:28.3px;top:167.2px"><b>1</b></div>
<div class="pill" style="left:101.2px;top:184.1px"><b>27</b></div>
<div class="pill" style="left:185.2px;top:213.5px"><b>1</b></div>
<div class="pill" style="left:294.1px;top:162.2px"><b>1</b></div>
<div class="pill" style="left:383.3px;top:149.1px"><b>1</b></div>
<div class="pill" style="left:627.1px;top:185.0px"><b>1</b></div>
<div class="pill" style="left:442.2px;top:344.9px"><b>1</b></div>
<div class="pill" style="left:680.1px;top:429.2px"><b>6</b></div>
<div class="a" style="left:0;top:0;width:713px;height:550px;border:1px solid rgba(110,110,120,.2)"></div>
<!-- zoom control -->
<div class="a" style="left:10px;top:10px;width:34px;height:65px;border:2px solid rgba(0,0,0,.22);border-radius:5px;background-clip:padding-box"></div>
<div class="a" style="left:12px;top:12px;width:30px;height:30px;background:#fff;border-radius:3px 3px 0 0;border-bottom:1px solid #ccc"></div>
<div class="a" style="left:12px;top:43px;width:30px;height:30px;background:#f4f4f4;border-radius:0 0 3px 3px"></div>
<div class="a" style="left:21px;top:12px;width:13px;height:30px;background:#3390ff"></div>
<div class="a" style="left:12px;top:13.5px;width:30px;height:30px;color:#fff;font:bold 22px/28px 'Liberation Sans',sans-serif;text-align:center">+</div>
<div class="a" style="left:12px;top:43.5px;width:30px;height:30px;color:#bbb;font:bold 22px/28px 'Liberation Sans',sans-serif;text-align:center">−</div>
<!-- bottom buttons -->
<div class="a" style="left:10px;top:507px;width:295px;height:28px;background:#3ba94b;border:1px solid #349743;border-radius:2px;color:#fff;font-size:11px;font-weight:bold;line-height:26px;text-align:center">Επανάληψη αναζήτησης με φίλτρο αυτή τη περιοχη</div>
<div class="a" style="left:311px;top:507px;width:237px;height:28px;background:#fff;border:1px solid #ddd;border-radius:2px;color:#1f7a99;font-size:12px;line-height:26px;text-align:center">Δείτε όλα τα τεκμήρια σε αυτή τη περιοχη</div>
<!-- attribution -->
<div class="a" style="right:0;bottom:0;height:14px;padding:0 5px;background:rgba(255,255,255,.8);font-size:10px;line-height:14px;color:#333"><svg style="display:inline-block;vertical-align:-1px;margin-right:3px" width="11" height="7.5" viewBox="0 0 12 8"><rect width="12" height="4" fill="#4c7be1"/><rect y="4" width="12" height="4" fill="#ffd500"/></svg><span style="color:#0078a8">Leaflet</span> | © <span style="color:#0078a8">OpenStreetMap</span> contributors, Points © 2012 LINZ</div>
</div>
</div>
</body>
</html>
